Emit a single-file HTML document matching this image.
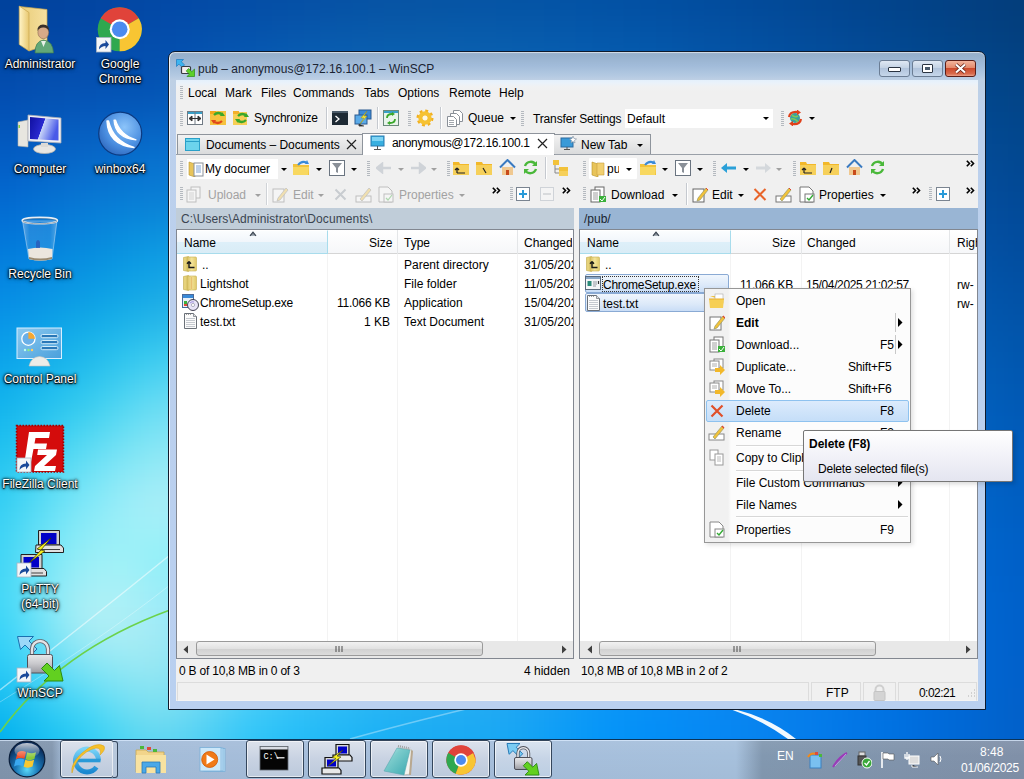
<!DOCTYPE html>
<html><head><meta charset="utf-8">
<style>
*{box-sizing:border-box;margin:0;padding:0}
html,body{width:1024px;height:779px;overflow:hidden}
body{position:relative;font-family:"Liberation Sans",sans-serif;font-size:12px;color:#000;background:#0d56b4}
.a{position:absolute}
.t{position:absolute;white-space:nowrap;line-height:14px}
.dl{position:absolute;color:#fff;font-size:12px;text-align:center;line-height:15px;text-shadow:0 1px 1px #000,0 0 2px #000,0 0 3px #000,0 1px 4px rgba(0,0,0,.7);white-space:nowrap}
#win{position:absolute;left:168px;top:51px;width:818px;height:659px;border:1px solid #0e1a2c;border-radius:7px 7px 0 0;background:linear-gradient(#9fb4cc 0,#96b0cc 3px,#a2bcda 14px,#b4cae2 24px,#bed0e4 28px,#bcd0ec 60px,#b9d0f0 659px);box-shadow:inset 1px 0 0 rgba(255,255,255,.85),inset 0 1px 0 rgba(255,255,255,.5)}
#client{position:absolute;left:176px;top:80px;width:802px;height:621px;background:#f0f0f0}
.grip{position:absolute;width:3px;height:14px;background:repeating-linear-gradient(#b4b9bf 0 1px,transparent 1px 2px)}
.sep{position:absolute;width:1px;height:22px;background:#c5c9cf;box-shadow:1px 0 0 #fff}
.dd{position:absolute;width:0;height:0;border-left:3px solid transparent;border-right:3px solid transparent;border-top:3px solid #000}
.ddg{position:absolute;width:0;height:0;border-left:3px solid transparent;border-right:3px solid transparent;border-top:3px solid #a0a0a0}
.gray{color:#a2a2a2}
#task{position:absolute;left:0;top:739px;width:1024px;height:40px}
</style></head><body>
<svg class="a" style="left:0;top:0" width="1024" height="779"><defs><filter id="bgb" x="-5%" y="-5%" width="110%" height="110%" color-interpolation-filters="sRGB"><feGaussianBlur stdDeviation="9"/></filter></defs><g filter="url(#bgb)"><rect x="-32" y="-32" width="17" height="17" fill="#00409b"/><rect x="-16" y="-32" width="17" height="17" fill="#00409b"/><rect x="0" y="-32" width="17" height="17" fill="#00419c"/><rect x="16" y="-32" width="17" height="17" fill="#00429c"/><rect x="32" y="-32" width="17" height="17" fill="#01429d"/><rect x="48" y="-32" width="17" height="17" fill="#01439e"/><rect x="64" y="-32" width="17" height="17" fill="#02449f"/><rect x="80" y="-32" width="17" height="17" fill="#0244a0"/><rect x="96" y="-32" width="17" height="17" fill="#0245a1"/><rect x="112" y="-32" width="17" height="17" fill="#0346a2"/><rect x="128" y="-32" width="17" height="17" fill="#0347a3"/><rect x="144" y="-32" width="17" height="17" fill="#0348a4"/><rect x="160" y="-32" width="17" height="17" fill="#0348a5"/><rect x="176" y="-32" width="17" height="17" fill="#0349a5"/><rect x="192" y="-32" width="17" height="17" fill="#034aa5"/><rect x="208" y="-32" width="17" height="17" fill="#044ba6"/><rect x="224" y="-32" width="17" height="17" fill="#044ca6"/><rect x="240" y="-32" width="17" height="17" fill="#044da6"/><rect x="256" y="-32" width="17" height="17" fill="#044ea5"/><rect x="272" y="-32" width="17" height="17" fill="#054ea5"/><rect x="288" y="-32" width="17" height="17" fill="#054fa5"/><rect x="304" y="-32" width="17" height="17" fill="#0550a5"/><rect x="320" y="-32" width="17" height="17" fill="#0551a5"/><rect x="336" y="-32" width="17" height="17" fill="#0651a4"/><rect x="352" y="-32" width="17" height="17" fill="#0652a4"/><rect x="368" y="-32" width="17" height="17" fill="#0653a4"/><rect x="384" y="-32" width="17" height="17" fill="#0653a4"/><rect x="400" y="-32" width="17" height="17" fill="#0653a3"/><rect x="416" y="-32" width="17" height="17" fill="#0654a4"/><rect x="432" y="-32" width="17" height="17" fill="#0654a4"/><rect x="448" y="-32" width="17" height="17" fill="#0654a4"/><rect x="464" y="-32" width="17" height="17" fill="#0554a4"/><rect x="480" y="-32" width="17" height="17" fill="#0554a4"/><rect x="496" y="-32" width="17" height="17" fill="#0554a4"/><rect x="512" y="-32" width="17" height="17" fill="#0453a4"/><rect x="528" y="-32" width="17" height="17" fill="#0453a5"/><rect x="544" y="-32" width="17" height="17" fill="#0453a5"/><rect x="560" y="-32" width="17" height="17" fill="#0352a4"/><rect x="576" y="-32" width="17" height="17" fill="#0352a4"/><rect x="592" y="-32" width="17" height="17" fill="#0351a4"/><rect x="608" y="-32" width="17" height="17" fill="#0251a3"/><rect x="624" y="-32" width="17" height="17" fill="#0250a3"/><rect x="640" y="-32" width="17" height="17" fill="#024fa2"/><rect x="656" y="-32" width="17" height="17" fill="#024ea1"/><rect x="672" y="-32" width="17" height="17" fill="#024ea0"/><rect x="688" y="-32" width="17" height="17" fill="#024d9e"/><rect x="704" y="-32" width="17" height="17" fill="#024c9d"/><rect x="720" y="-32" width="17" height="17" fill="#024b9c"/><rect x="736" y="-32" width="17" height="17" fill="#024a9a"/><rect x="752" y="-32" width="17" height="17" fill="#024999"/><rect x="768" y="-32" width="17" height="17" fill="#024997"/><rect x="784" y="-32" width="17" height="17" fill="#024896"/><rect x="800" y="-32" width="17" height="17" fill="#024794"/><rect x="816" y="-32" width="17" height="17" fill="#024692"/><rect x="832" y="-32" width="17" height="17" fill="#024590"/><rect x="848" y="-32" width="17" height="17" fill="#02458e"/><rect x="864" y="-32" width="17" height="17" fill="#02448c"/><rect x="880" y="-32" width="17" height="17" fill="#02438b"/><rect x="896" y="-32" width="17" height="17" fill="#024289"/><rect x="912" y="-32" width="17" height="17" fill="#024287"/><rect x="928" y="-32" width="17" height="17" fill="#024185"/><rect x="944" y="-32" width="17" height="17" fill="#034083"/><rect x="960" y="-32" width="17" height="17" fill="#033f81"/><rect x="976" y="-32" width="17" height="17" fill="#033f7f"/><rect x="992" y="-32" width="17" height="17" fill="#033e7d"/><rect x="1008" y="-32" width="17" height="17" fill="#033d7b"/><rect x="1024" y="-32" width="17" height="17" fill="#043c7a"/><rect x="1040" y="-32" width="17" height="17" fill="#043c7a"/><rect x="1056" y="-32" width="17" height="17" fill="#043c7a"/><rect x="-32" y="-16" width="17" height="17" fill="#00409b"/><rect x="-16" y="-16" width="17" height="17" fill="#00409b"/><rect x="0" y="-16" width="17" height="17" fill="#00419c"/><rect x="16" y="-16" width="17" height="17" fill="#00429c"/><rect x="32" y="-16" width="17" height="17" fill="#01429d"/><rect x="48" y="-16" width="17" height="17" fill="#01439e"/><rect x="64" y="-16" width="17" height="17" fill="#02449f"/><rect x="80" y="-16" width="17" height="17" fill="#0244a0"/><rect x="96" y="-16" width="17" height="17" fill="#0245a1"/><rect x="112" y="-16" width="17" height="17" fill="#0346a2"/><rect x="128" y="-16" width="17" height="17" fill="#0347a3"/><rect x="144" y="-16" width="17" height="17" fill="#0348a4"/><rect x="160" y="-16" width="17" height="17" fill="#0348a5"/><rect x="176" y="-16" width="17" height="17" fill="#0349a5"/><rect x="192" y="-16" width="17" height="17" fill="#034aa5"/><rect x="208" y="-16" width="17" height="17" fill="#044ba6"/><rect x="224" y="-16" width="17" height="17" fill="#044ca6"/><rect x="240" y="-16" width="17" height="17" fill="#044da6"/><rect x="256" y="-16" width="17" height="17" fill="#044ea5"/><rect x="272" y="-16" width="17" height="17" fill="#054ea5"/><rect x="288" y="-16" width="17" height="17" fill="#054fa5"/><rect x="304" y="-16" width="17" height="17" fill="#0550a5"/><rect x="320" y="-16" width="17" height="17" fill="#0551a5"/><rect x="336" y="-16" width="17" height="17" fill="#0651a4"/><rect x="352" y="-16" width="17" height="17" fill="#0652a4"/><rect x="368" y="-16" width="17" height="17" fill="#0653a4"/><rect x="384" y="-16" width="17" height="17" fill="#0653a4"/><rect x="400" y="-16" width="17" height="17" fill="#0653a3"/><rect x="416" y="-16" width="17" height="17" fill="#0654a4"/><rect x="432" y="-16" width="17" height="17" fill="#0654a4"/><rect x="448" y="-16" width="17" height="17" fill="#0654a4"/><rect x="464" y="-16" width="17" height="17" fill="#0554a4"/><rect x="480" y="-16" width="17" height="17" fill="#0554a4"/><rect x="496" y="-16" width="17" height="17" fill="#0554a4"/><rect x="512" y="-16" width="17" height="17" fill="#0453a4"/><rect x="528" y="-16" width="17" height="17" fill="#0453a5"/><rect x="544" y="-16" width="17" height="17" fill="#0453a5"/><rect x="560" y="-16" width="17" height="17" fill="#0352a4"/><rect x="576" y="-16" width="17" height="17" fill="#0352a4"/><rect x="592" y="-16" width="17" height="17" fill="#0351a4"/><rect x="608" y="-16" width="17" height="17" fill="#0251a3"/><rect x="624" y="-16" width="17" height="17" fill="#0250a3"/><rect x="640" y="-16" width="17" height="17" fill="#024fa2"/><rect x="656" y="-16" width="17" height="17" fill="#024ea1"/><rect x="672" y="-16" width="17" height="17" fill="#024ea0"/><rect x="688" y="-16" width="17" height="17" fill="#024d9e"/><rect x="704" y="-16" width="17" height="17" fill="#024c9d"/><rect x="720" y="-16" width="17" height="17" fill="#024b9c"/><rect x="736" y="-16" width="17" height="17" fill="#024a9a"/><rect x="752" y="-16" width="17" height="17" fill="#024999"/><rect x="768" y="-16" width="17" height="17" fill="#024997"/><rect x="784" y="-16" width="17" height="17" fill="#024896"/><rect x="800" y="-16" width="17" height="17" fill="#024794"/><rect x="816" y="-16" width="17" height="17" fill="#024692"/><rect x="832" y="-16" width="17" height="17" fill="#024590"/><rect x="848" y="-16" width="17" height="17" fill="#02458e"/><rect x="864" y="-16" width="17" height="17" fill="#02448c"/><rect x="880" y="-16" width="17" height="17" fill="#02438b"/><rect x="896" y="-16" width="17" height="17" fill="#024289"/><rect x="912" y="-16" width="17" height="17" fill="#024287"/><rect x="928" y="-16" width="17" height="17" fill="#024185"/><rect x="944" y="-16" width="17" height="17" fill="#034083"/><rect x="960" y="-16" width="17" height="17" fill="#033f81"/><rect x="976" y="-16" width="17" height="17" fill="#033f7f"/><rect x="992" y="-16" width="17" height="17" fill="#033e7d"/><rect x="1008" y="-16" width="17" height="17" fill="#033d7b"/><rect x="1024" y="-16" width="17" height="17" fill="#043c7a"/><rect x="1040" y="-16" width="17" height="17" fill="#043c7a"/><rect x="1056" y="-16" width="17" height="17" fill="#043c7a"/><rect x="-32" y="0" width="17" height="17" fill="#00419d"/><rect x="-16" y="0" width="17" height="17" fill="#00419d"/><rect x="0" y="0" width="17" height="17" fill="#00429d"/><rect x="16" y="0" width="17" height="17" fill="#00439e"/><rect x="32" y="0" width="17" height="17" fill="#01439f"/><rect x="48" y="0" width="17" height="17" fill="#0244a0"/><rect x="64" y="0" width="17" height="17" fill="#0245a1"/><rect x="80" y="0" width="17" height="17" fill="#0245a2"/><rect x="96" y="0" width="17" height="17" fill="#0346a3"/><rect x="112" y="0" width="17" height="17" fill="#0347a4"/><rect x="128" y="0" width="17" height="17" fill="#0348a5"/><rect x="144" y="0" width="17" height="17" fill="#0349a6"/><rect x="160" y="0" width="17" height="17" fill="#034aa7"/><rect x="176" y="0" width="17" height="17" fill="#034aa7"/><rect x="192" y="0" width="17" height="17" fill="#044ba7"/><rect x="208" y="0" width="17" height="17" fill="#044ca7"/><rect x="224" y="0" width="17" height="17" fill="#044da7"/><rect x="240" y="0" width="17" height="17" fill="#044ea7"/><rect x="256" y="0" width="17" height="17" fill="#054fa7"/><rect x="272" y="0" width="17" height="17" fill="#0550a7"/><rect x="288" y="0" width="17" height="17" fill="#0551a7"/><rect x="304" y="0" width="17" height="17" fill="#0652a7"/><rect x="320" y="0" width="17" height="17" fill="#0652a6"/><rect x="336" y="0" width="17" height="17" fill="#0653a6"/><rect x="352" y="0" width="17" height="17" fill="#0654a6"/><rect x="368" y="0" width="17" height="17" fill="#0754a5"/><rect x="384" y="0" width="17" height="17" fill="#0755a5"/><rect x="400" y="0" width="17" height="17" fill="#0755a5"/><rect x="416" y="0" width="17" height="17" fill="#0755a5"/><rect x="432" y="0" width="17" height="17" fill="#0655a5"/><rect x="448" y="0" width="17" height="17" fill="#0655a5"/><rect x="464" y="0" width="17" height="17" fill="#0655a6"/><rect x="480" y="0" width="17" height="17" fill="#0655a6"/><rect x="496" y="0" width="17" height="17" fill="#0555a6"/><rect x="512" y="0" width="17" height="17" fill="#0555a6"/><rect x="528" y="0" width="17" height="17" fill="#0555a6"/><rect x="544" y="0" width="17" height="17" fill="#0454a6"/><rect x="560" y="0" width="17" height="17" fill="#0454a6"/><rect x="576" y="0" width="17" height="17" fill="#0353a6"/><rect x="592" y="0" width="17" height="17" fill="#0353a5"/><rect x="608" y="0" width="17" height="17" fill="#0352a5"/><rect x="624" y="0" width="17" height="17" fill="#0351a4"/><rect x="640" y="0" width="17" height="17" fill="#0250a3"/><rect x="656" y="0" width="17" height="17" fill="#0250a2"/><rect x="672" y="0" width="17" height="17" fill="#024fa1"/><rect x="688" y="0" width="17" height="17" fill="#024ea0"/><rect x="704" y="0" width="17" height="17" fill="#024d9f"/><rect x="720" y="0" width="17" height="17" fill="#024c9d"/><rect x="736" y="0" width="17" height="17" fill="#024b9c"/><rect x="752" y="0" width="17" height="17" fill="#024a9a"/><rect x="768" y="0" width="17" height="17" fill="#024a99"/><rect x="784" y="0" width="17" height="17" fill="#024997"/><rect x="800" y="0" width="17" height="17" fill="#024895"/><rect x="816" y="0" width="17" height="17" fill="#024793"/><rect x="832" y="0" width="17" height="17" fill="#024692"/><rect x="848" y="0" width="17" height="17" fill="#024590"/><rect x="864" y="0" width="17" height="17" fill="#02458e"/><rect x="880" y="0" width="17" height="17" fill="#02448c"/><rect x="896" y="0" width="17" height="17" fill="#02438a"/><rect x="912" y="0" width="17" height="17" fill="#024288"/><rect x="928" y="0" width="17" height="17" fill="#024286"/><rect x="944" y="0" width="17" height="17" fill="#034184"/><rect x="960" y="0" width="17" height="17" fill="#034082"/><rect x="976" y="0" width="17" height="17" fill="#033f80"/><rect x="992" y="0" width="17" height="17" fill="#033e7e"/><rect x="1008" y="0" width="17" height="17" fill="#033e7c"/><rect x="1024" y="0" width="17" height="17" fill="#043d7b"/><rect x="1040" y="0" width="17" height="17" fill="#043d7b"/><rect x="1056" y="0" width="17" height="17" fill="#043d7b"/><rect x="-32" y="16" width="17" height="17" fill="#0044a0"/><rect x="-16" y="16" width="17" height="17" fill="#0044a0"/><rect x="0" y="16" width="17" height="17" fill="#0044a0"/><rect x="16" y="16" width="17" height="17" fill="#0145a1"/><rect x="32" y="16" width="17" height="17" fill="#0246a2"/><rect x="48" y="16" width="17" height="17" fill="#0246a3"/><rect x="64" y="16" width="17" height="17" fill="#0347a4"/><rect x="80" y="16" width="17" height="17" fill="#0347a5"/><rect x="96" y="16" width="17" height="17" fill="#0348a6"/><rect x="112" y="16" width="17" height="17" fill="#0349a7"/><rect x="128" y="16" width="17" height="17" fill="#034aa8"/><rect x="144" y="16" width="17" height="17" fill="#034ba9"/><rect x="160" y="16" width="17" height="17" fill="#044caa"/><rect x="176" y="16" width="17" height="17" fill="#044daa"/><rect x="192" y="16" width="17" height="17" fill="#044eaa"/><rect x="208" y="16" width="17" height="17" fill="#044faa"/><rect x="224" y="16" width="17" height="17" fill="#0450aa"/><rect x="240" y="16" width="17" height="17" fill="#0551ab"/><rect x="256" y="16" width="17" height="17" fill="#0552aa"/><rect x="272" y="16" width="17" height="17" fill="#0653aa"/><rect x="288" y="16" width="17" height="17" fill="#0654aa"/><rect x="304" y="16" width="17" height="17" fill="#0655aa"/><rect x="320" y="16" width="17" height="17" fill="#0756aa"/><rect x="336" y="16" width="17" height="17" fill="#0757a9"/><rect x="352" y="16" width="17" height="17" fill="#0757a9"/><rect x="368" y="16" width="17" height="17" fill="#0858a9"/><rect x="384" y="16" width="17" height="17" fill="#0858a8"/><rect x="400" y="16" width="17" height="17" fill="#0858a8"/><rect x="416" y="16" width="17" height="17" fill="#0859a8"/><rect x="432" y="16" width="17" height="17" fill="#0859a8"/><rect x="448" y="16" width="17" height="17" fill="#0759a9"/><rect x="464" y="16" width="17" height="17" fill="#0759a9"/><rect x="480" y="16" width="17" height="17" fill="#0759a9"/><rect x="496" y="16" width="17" height="17" fill="#0658a9"/><rect x="512" y="16" width="17" height="17" fill="#0658a9"/><rect x="528" y="16" width="17" height="17" fill="#0658a9"/><rect x="544" y="16" width="17" height="17" fill="#0557a9"/><rect x="560" y="16" width="17" height="17" fill="#0557a9"/><rect x="576" y="16" width="17" height="17" fill="#0456a9"/><rect x="592" y="16" width="17" height="17" fill="#0455a8"/><rect x="608" y="16" width="17" height="17" fill="#0455a8"/><rect x="624" y="16" width="17" height="17" fill="#0354a7"/><rect x="640" y="16" width="17" height="17" fill="#0353a6"/><rect x="656" y="16" width="17" height="17" fill="#0352a5"/><rect x="672" y="16" width="17" height="17" fill="#0351a4"/><rect x="688" y="16" width="17" height="17" fill="#0350a3"/><rect x="704" y="16" width="17" height="17" fill="#0350a1"/><rect x="720" y="16" width="17" height="17" fill="#034fa0"/><rect x="736" y="16" width="17" height="17" fill="#034e9e"/><rect x="752" y="16" width="17" height="17" fill="#034d9d"/><rect x="768" y="16" width="17" height="17" fill="#034c9b"/><rect x="784" y="16" width="17" height="17" fill="#034b9a"/><rect x="800" y="16" width="17" height="17" fill="#034a98"/><rect x="816" y="16" width="17" height="17" fill="#034996"/><rect x="832" y="16" width="17" height="17" fill="#024894"/><rect x="848" y="16" width="17" height="17" fill="#024792"/><rect x="864" y="16" width="17" height="17" fill="#024690"/><rect x="880" y="16" width="17" height="17" fill="#02468e"/><rect x="896" y="16" width="17" height="17" fill="#02458c"/><rect x="912" y="16" width="17" height="17" fill="#02448a"/><rect x="928" y="16" width="17" height="17" fill="#024388"/><rect x="944" y="16" width="17" height="17" fill="#034286"/><rect x="960" y="16" width="17" height="17" fill="#034284"/><rect x="976" y="16" width="17" height="17" fill="#034182"/><rect x="992" y="16" width="17" height="17" fill="#034080"/><rect x="1008" y="16" width="17" height="17" fill="#033f7e"/><rect x="1024" y="16" width="17" height="17" fill="#033f7d"/><rect x="1040" y="16" width="17" height="17" fill="#033f7d"/><rect x="1056" y="16" width="17" height="17" fill="#033f7d"/><rect x="-32" y="32" width="17" height="17" fill="#0046a3"/><rect x="-16" y="32" width="17" height="17" fill="#0046a3"/><rect x="0" y="32" width="17" height="17" fill="#0146a4"/><rect x="16" y="32" width="17" height="17" fill="#0247a4"/><rect x="32" y="32" width="17" height="17" fill="#0248a5"/><rect x="48" y="32" width="17" height="17" fill="#0348a6"/><rect x="64" y="32" width="17" height="17" fill="#0349a7"/><rect x="80" y="32" width="17" height="17" fill="#034aa8"/><rect x="96" y="32" width="17" height="17" fill="#034aa9"/><rect x="112" y="32" width="17" height="17" fill="#034baa"/><rect x="128" y="32" width="17" height="17" fill="#044cab"/><rect x="144" y="32" width="17" height="17" fill="#044dac"/><rect x="160" y="32" width="17" height="17" fill="#044eac"/><rect x="176" y="32" width="17" height="17" fill="#044fad"/><rect x="192" y="32" width="17" height="17" fill="#0450ad"/><rect x="208" y="32" width="17" height="17" fill="#0552ad"/><rect x="224" y="32" width="17" height="17" fill="#0553ae"/><rect x="240" y="32" width="17" height="17" fill="#0554ae"/><rect x="256" y="32" width="17" height="17" fill="#0655ae"/><rect x="272" y="32" width="17" height="17" fill="#0657ae"/><rect x="288" y="32" width="17" height="17" fill="#0758ae"/><rect x="304" y="32" width="17" height="17" fill="#0759ae"/><rect x="320" y="32" width="17" height="17" fill="#085aad"/><rect x="336" y="32" width="17" height="17" fill="#085aad"/><rect x="352" y="32" width="17" height="17" fill="#095bad"/><rect x="368" y="32" width="17" height="17" fill="#095bac"/><rect x="384" y="32" width="17" height="17" fill="#095cac"/><rect x="400" y="32" width="17" height="17" fill="#095cac"/><rect x="416" y="32" width="17" height="17" fill="#095cac"/><rect x="432" y="32" width="17" height="17" fill="#095cac"/><rect x="448" y="32" width="17" height="17" fill="#095cac"/><rect x="464" y="32" width="17" height="17" fill="#085cac"/><rect x="480" y="32" width="17" height="17" fill="#085cac"/><rect x="496" y="32" width="17" height="17" fill="#085cac"/><rect x="512" y="32" width="17" height="17" fill="#075bac"/><rect x="528" y="32" width="17" height="17" fill="#075bac"/><rect x="544" y="32" width="17" height="17" fill="#065aac"/><rect x="560" y="32" width="17" height="17" fill="#065aac"/><rect x="576" y="32" width="17" height="17" fill="#0559ac"/><rect x="592" y="32" width="17" height="17" fill="#0558ab"/><rect x="608" y="32" width="17" height="17" fill="#0558ab"/><rect x="624" y="32" width="17" height="17" fill="#0457aa"/><rect x="640" y="32" width="17" height="17" fill="#0456a9"/><rect x="656" y="32" width="17" height="17" fill="#0455a8"/><rect x="672" y="32" width="17" height="17" fill="#0454a7"/><rect x="688" y="32" width="17" height="17" fill="#0453a5"/><rect x="704" y="32" width="17" height="17" fill="#0452a4"/><rect x="720" y="32" width="17" height="17" fill="#0351a3"/><rect x="736" y="32" width="17" height="17" fill="#0350a1"/><rect x="752" y="32" width="17" height="17" fill="#034fa0"/><rect x="768" y="32" width="17" height="17" fill="#034e9e"/><rect x="784" y="32" width="17" height="17" fill="#034d9c"/><rect x="800" y="32" width="17" height="17" fill="#034c9a"/><rect x="816" y="32" width="17" height="17" fill="#034b99"/><rect x="832" y="32" width="17" height="17" fill="#034a97"/><rect x="848" y="32" width="17" height="17" fill="#034995"/><rect x="864" y="32" width="17" height="17" fill="#034893"/><rect x="880" y="32" width="17" height="17" fill="#024791"/><rect x="896" y="32" width="17" height="17" fill="#02478f"/><rect x="912" y="32" width="17" height="17" fill="#02468d"/><rect x="928" y="32" width="17" height="17" fill="#02458a"/><rect x="944" y="32" width="17" height="17" fill="#024488"/><rect x="960" y="32" width="17" height="17" fill="#034386"/><rect x="976" y="32" width="17" height="17" fill="#034284"/><rect x="992" y="32" width="17" height="17" fill="#034182"/><rect x="1008" y="32" width="17" height="17" fill="#034080"/><rect x="1024" y="32" width="17" height="17" fill="#034080"/><rect x="1040" y="32" width="17" height="17" fill="#034080"/><rect x="1056" y="32" width="17" height="17" fill="#034080"/><rect x="-32" y="48" width="17" height="17" fill="#0148a7"/><rect x="-16" y="48" width="17" height="17" fill="#0148a7"/><rect x="0" y="48" width="17" height="17" fill="#0148a7"/><rect x="16" y="48" width="17" height="17" fill="#0249a8"/><rect x="32" y="48" width="17" height="17" fill="#034aa9"/><rect x="48" y="48" width="17" height="17" fill="#034baa"/><rect x="64" y="48" width="17" height="17" fill="#044bab"/><rect x="80" y="48" width="17" height="17" fill="#044cab"/><rect x="96" y="48" width="17" height="17" fill="#044dac"/><rect x="112" y="48" width="17" height="17" fill="#044dad"/><rect x="128" y="48" width="17" height="17" fill="#044eae"/><rect x="144" y="48" width="17" height="17" fill="#044fae"/><rect x="160" y="48" width="17" height="17" fill="#0450af"/><rect x="176" y="48" width="17" height="17" fill="#0451b0"/><rect x="192" y="48" width="17" height="17" fill="#0553b0"/><rect x="208" y="48" width="17" height="17" fill="#0555b1"/><rect x="224" y="48" width="17" height="17" fill="#0656b1"/><rect x="240" y="48" width="17" height="17" fill="#0658b1"/><rect x="256" y="48" width="17" height="17" fill="#0759b2"/><rect x="272" y="48" width="17" height="17" fill="#075ab1"/><rect x="288" y="48" width="17" height="17" fill="#085cb1"/><rect x="304" y="48" width="17" height="17" fill="#085db1"/><rect x="320" y="48" width="17" height="17" fill="#095db1"/><rect x="336" y="48" width="17" height="17" fill="#095eb1"/><rect x="352" y="48" width="17" height="17" fill="#0a5fb0"/><rect x="368" y="48" width="17" height="17" fill="#0a5fb0"/><rect x="384" y="48" width="17" height="17" fill="#0a60b0"/><rect x="400" y="48" width="17" height="17" fill="#0a60af"/><rect x="416" y="48" width="17" height="17" fill="#0a60af"/><rect x="432" y="48" width="17" height="17" fill="#0a60af"/><rect x="448" y="48" width="17" height="17" fill="#0a60af"/><rect x="464" y="48" width="17" height="17" fill="#0a60af"/><rect x="480" y="48" width="17" height="17" fill="#0a5faf"/><rect x="496" y="48" width="17" height="17" fill="#095faf"/><rect x="512" y="48" width="17" height="17" fill="#095faf"/><rect x="528" y="48" width="17" height="17" fill="#085eaf"/><rect x="544" y="48" width="17" height="17" fill="#085eaf"/><rect x="560" y="48" width="17" height="17" fill="#075daf"/><rect x="576" y="48" width="17" height="17" fill="#075caf"/><rect x="592" y="48" width="17" height="17" fill="#065bae"/><rect x="608" y="48" width="17" height="17" fill="#065aad"/><rect x="624" y="48" width="17" height="17" fill="#055aad"/><rect x="640" y="48" width="17" height="17" fill="#0559ac"/><rect x="656" y="48" width="17" height="17" fill="#0558ab"/><rect x="672" y="48" width="17" height="17" fill="#0557a9"/><rect x="688" y="48" width="17" height="17" fill="#0455a8"/><rect x="704" y="48" width="17" height="17" fill="#0454a7"/><rect x="720" y="48" width="17" height="17" fill="#0453a5"/><rect x="736" y="48" width="17" height="17" fill="#0452a4"/><rect x="752" y="48" width="17" height="17" fill="#0451a2"/><rect x="768" y="48" width="17" height="17" fill="#0450a1"/><rect x="784" y="48" width="17" height="17" fill="#034f9f"/><rect x="800" y="48" width="17" height="17" fill="#034e9d"/><rect x="816" y="48" width="17" height="17" fill="#034d9b"/><rect x="832" y="48" width="17" height="17" fill="#034c99"/><rect x="848" y="48" width="17" height="17" fill="#034b97"/><rect x="864" y="48" width="17" height="17" fill="#034a95"/><rect x="880" y="48" width="17" height="17" fill="#034993"/><rect x="896" y="48" width="17" height="17" fill="#034891"/><rect x="912" y="48" width="17" height="17" fill="#02478f"/><rect x="928" y="48" width="17" height="17" fill="#02468d"/><rect x="944" y="48" width="17" height="17" fill="#02468b"/><rect x="960" y="48" width="17" height="17" fill="#024589"/><rect x="976" y="48" width="17" height="17" fill="#034487"/><rect x="992" y="48" width="17" height="17" fill="#034385"/><rect x="1008" y="48" width="17" height="17" fill="#034283"/><rect x="1024" y="48" width="17" height="17" fill="#034182"/><rect x="1040" y="48" width="17" height="17" fill="#034182"/><rect x="1056" y="48" width="17" height="17" fill="#034182"/><rect x="-32" y="64" width="17" height="17" fill="#014aab"/><rect x="-16" y="64" width="17" height="17" fill="#014aab"/><rect x="0" y="64" width="17" height="17" fill="#024bab"/><rect x="16" y="64" width="17" height="17" fill="#034cac"/><rect x="32" y="64" width="17" height="17" fill="#044dad"/><rect x="48" y="64" width="17" height="17" fill="#044dad"/><rect x="64" y="64" width="17" height="17" fill="#044eae"/><rect x="80" y="64" width="17" height="17" fill="#044faf"/><rect x="96" y="64" width="17" height="17" fill="#044fb0"/><rect x="112" y="64" width="17" height="17" fill="#0450b0"/><rect x="128" y="64" width="17" height="17" fill="#0450b1"/><rect x="144" y="64" width="17" height="17" fill="#0451b1"/><rect x="160" y="64" width="17" height="17" fill="#0453b2"/><rect x="176" y="64" width="17" height="17" fill="#0454b3"/><rect x="192" y="64" width="17" height="17" fill="#0556b4"/><rect x="208" y="64" width="17" height="17" fill="#0658b4"/><rect x="224" y="64" width="17" height="17" fill="#065ab5"/><rect x="240" y="64" width="17" height="17" fill="#075cb5"/><rect x="256" y="64" width="17" height="17" fill="#085db5"/><rect x="272" y="64" width="17" height="17" fill="#085eb5"/><rect x="288" y="64" width="17" height="17" fill="#0960b5"/><rect x="304" y="64" width="17" height="17" fill="#0a61b5"/><rect x="320" y="64" width="17" height="17" fill="#0a62b5"/><rect x="336" y="64" width="17" height="17" fill="#0b62b4"/><rect x="352" y="64" width="17" height="17" fill="#0b63b4"/><rect x="368" y="64" width="17" height="17" fill="#0c63b4"/><rect x="384" y="64" width="17" height="17" fill="#0c64b3"/><rect x="400" y="64" width="17" height="17" fill="#0c64b3"/><rect x="416" y="64" width="17" height="17" fill="#0c64b3"/><rect x="432" y="64" width="17" height="17" fill="#0c64b3"/><rect x="448" y="64" width="17" height="17" fill="#0c64b3"/><rect x="464" y="64" width="17" height="17" fill="#0c63b3"/><rect x="480" y="64" width="17" height="17" fill="#0b63b3"/><rect x="496" y="64" width="17" height="17" fill="#0b63b3"/><rect x="512" y="64" width="17" height="17" fill="#0a62b3"/><rect x="528" y="64" width="17" height="17" fill="#0a61b2"/><rect x="544" y="64" width="17" height="17" fill="#0961b2"/><rect x="560" y="64" width="17" height="17" fill="#0960b2"/><rect x="576" y="64" width="17" height="17" fill="#085fb1"/><rect x="592" y="64" width="17" height="17" fill="#085eb1"/><rect x="608" y="64" width="17" height="17" fill="#075db0"/><rect x="624" y="64" width="17" height="17" fill="#075caf"/><rect x="640" y="64" width="17" height="17" fill="#065bae"/><rect x="656" y="64" width="17" height="17" fill="#065aad"/><rect x="672" y="64" width="17" height="17" fill="#0659ac"/><rect x="688" y="64" width="17" height="17" fill="#0558ab"/><rect x="704" y="64" width="17" height="17" fill="#0557a9"/><rect x="720" y="64" width="17" height="17" fill="#0556a8"/><rect x="736" y="64" width="17" height="17" fill="#0554a6"/><rect x="752" y="64" width="17" height="17" fill="#0453a5"/><rect x="768" y="64" width="17" height="17" fill="#0452a3"/><rect x="784" y="64" width="17" height="17" fill="#0451a1"/><rect x="800" y="64" width="17" height="17" fill="#0450a0"/><rect x="816" y="64" width="17" height="17" fill="#044f9e"/><rect x="832" y="64" width="17" height="17" fill="#034e9c"/><rect x="848" y="64" width="17" height="17" fill="#034d9a"/><rect x="864" y="64" width="17" height="17" fill="#034c98"/><rect x="880" y="64" width="17" height="17" fill="#034b96"/><rect x="896" y="64" width="17" height="17" fill="#034a93"/><rect x="912" y="64" width="17" height="17" fill="#034991"/><rect x="928" y="64" width="17" height="17" fill="#03488f"/><rect x="944" y="64" width="17" height="17" fill="#02478d"/><rect x="960" y="64" width="17" height="17" fill="#02468b"/><rect x="976" y="64" width="17" height="17" fill="#024589"/><rect x="992" y="64" width="17" height="17" fill="#034487"/><rect x="1008" y="64" width="17" height="17" fill="#034385"/><rect x="1024" y="64" width="17" height="17" fill="#034384"/><rect x="1040" y="64" width="17" height="17" fill="#034384"/><rect x="1056" y="64" width="17" height="17" fill="#034384"/><rect x="-32" y="80" width="17" height="17" fill="#024daf"/><rect x="-16" y="80" width="17" height="17" fill="#024daf"/><rect x="0" y="80" width="17" height="17" fill="#034daf"/><rect x="16" y="80" width="17" height="17" fill="#044eb0"/><rect x="32" y="80" width="17" height="17" fill="#0450b1"/><rect x="48" y="80" width="17" height="17" fill="#0551b2"/><rect x="64" y="80" width="17" height="17" fill="#0552b3"/><rect x="80" y="80" width="17" height="17" fill="#0552b3"/><rect x="96" y="80" width="17" height="17" fill="#0553b4"/><rect x="112" y="80" width="17" height="17" fill="#0453b4"/><rect x="128" y="80" width="17" height="17" fill="#0454b4"/><rect x="144" y="80" width="17" height="17" fill="#0454b5"/><rect x="160" y="80" width="17" height="17" fill="#0456b5"/><rect x="176" y="80" width="17" height="17" fill="#0558b6"/><rect x="960" y="80" width="17" height="17" fill="#02478d"/><rect x="976" y="80" width="17" height="17" fill="#02468b"/><rect x="992" y="80" width="17" height="17" fill="#024589"/><rect x="1008" y="80" width="17" height="17" fill="#034487"/><rect x="1024" y="80" width="17" height="17" fill="#034486"/><rect x="1040" y="80" width="17" height="17" fill="#034486"/><rect x="1056" y="80" width="17" height="17" fill="#034486"/><rect x="-32" y="96" width="17" height="17" fill="#0250b3"/><rect x="-16" y="96" width="17" height="17" fill="#0250b3"/><rect x="0" y="96" width="17" height="17" fill="#0350b4"/><rect x="16" y="96" width="17" height="17" fill="#0452b4"/><rect x="32" y="96" width="17" height="17" fill="#0553b5"/><rect x="48" y="96" width="17" height="17" fill="#0554b6"/><rect x="64" y="96" width="17" height="17" fill="#0555b7"/><rect x="80" y="96" width="17" height="17" fill="#0556b8"/><rect x="96" y="96" width="17" height="17" fill="#0557b9"/><rect x="112" y="96" width="17" height="17" fill="#0558b9"/><rect x="128" y="96" width="17" height="17" fill="#0558b9"/><rect x="144" y="96" width="17" height="17" fill="#0559b9"/><rect x="160" y="96" width="17" height="17" fill="#055bba"/><rect x="176" y="96" width="17" height="17" fill="#065dbb"/><rect x="960" y="96" width="17" height="17" fill="#024890"/><rect x="976" y="96" width="17" height="17" fill="#02478d"/><rect x="992" y="96" width="17" height="17" fill="#02468b"/><rect x="1008" y="96" width="17" height="17" fill="#034589"/><rect x="1024" y="96" width="17" height="17" fill="#034588"/><rect x="1040" y="96" width="17" height="17" fill="#034588"/><rect x="1056" y="96" width="17" height="17" fill="#034588"/><rect x="-32" y="112" width="17" height="17" fill="#0253b8"/><rect x="-16" y="112" width="17" height="17" fill="#0253b8"/><rect x="0" y="112" width="17" height="17" fill="#0354b8"/><rect x="16" y="112" width="17" height="17" fill="#0455b9"/><rect x="32" y="112" width="17" height="17" fill="#0557ba"/><rect x="48" y="112" width="17" height="17" fill="#0558bb"/><rect x="64" y="112" width="17" height="17" fill="#065abc"/><rect x="80" y="112" width="17" height="17" fill="#065bbd"/><rect x="96" y="112" width="17" height="17" fill="#065cbe"/><rect x="112" y="112" width="17" height="17" fill="#065dbe"/><rect x="128" y="112" width="17" height="17" fill="#055ebf"/><rect x="144" y="112" width="17" height="17" fill="#0660c0"/><rect x="160" y="112" width="17" height="17" fill="#0661c0"/><rect x="176" y="112" width="17" height="17" fill="#0663c1"/><rect x="960" y="112" width="17" height="17" fill="#034a92"/><rect x="976" y="112" width="17" height="17" fill="#024890"/><rect x="992" y="112" width="17" height="17" fill="#02478e"/><rect x="1008" y="112" width="17" height="17" fill="#02468c"/><rect x="1024" y="112" width="17" height="17" fill="#03468b"/><rect x="1040" y="112" width="17" height="17" fill="#03468b"/><rect x="1056" y="112" width="17" height="17" fill="#03468b"/><rect x="-32" y="128" width="17" height="17" fill="#0257bd"/><rect x="-16" y="128" width="17" height="17" fill="#0257bd"/><rect x="0" y="128" width="17" height="17" fill="#0358bd"/><rect x="16" y="128" width="17" height="17" fill="#0459be"/><rect x="32" y="128" width="17" height="17" fill="#055bbf"/><rect x="48" y="128" width="17" height="17" fill="#065dc0"/><rect x="64" y="128" width="17" height="17" fill="#065fc1"/><rect x="80" y="128" width="17" height="17" fill="#0660c2"/><rect x="96" y="128" width="17" height="17" fill="#0662c3"/><rect x="112" y="128" width="17" height="17" fill="#0663c4"/><rect x="128" y="128" width="17" height="17" fill="#0665c5"/><rect x="144" y="128" width="17" height="17" fill="#0767c6"/><rect x="160" y="128" width="17" height="17" fill="#0768c7"/><rect x="176" y="128" width="17" height="17" fill="#086ac6"/><rect x="960" y="128" width="17" height="17" fill="#034b94"/><rect x="976" y="128" width="17" height="17" fill="#034992"/><rect x="992" y="128" width="17" height="17" fill="#024890"/><rect x="1008" y="128" width="17" height="17" fill="#02478e"/><rect x="1024" y="128" width="17" height="17" fill="#02468d"/><rect x="1040" y="128" width="17" height="17" fill="#02468d"/><rect x="1056" y="128" width="17" height="17" fill="#02468d"/><rect x="-32" y="144" width="17" height="17" fill="#025bc2"/><rect x="-16" y="144" width="17" height="17" fill="#025bc2"/><rect x="0" y="144" width="17" height="17" fill="#035cc2"/><rect x="16" y="144" width="17" height="17" fill="#045ec3"/><rect x="32" y="144" width="17" height="17" fill="#0560c4"/><rect x="48" y="144" width="17" height="17" fill="#0662c5"/><rect x="64" y="144" width="17" height="17" fill="#0664c6"/><rect x="80" y="144" width="17" height="17" fill="#0766c7"/><rect x="96" y="144" width="17" height="17" fill="#0768c8"/><rect x="112" y="144" width="17" height="17" fill="#076ac9"/><rect x="128" y="144" width="17" height="17" fill="#076ccb"/><rect x="144" y="144" width="17" height="17" fill="#076ecc"/><rect x="160" y="144" width="17" height="17" fill="#086fcc"/><rect x="176" y="144" width="17" height="17" fill="#0970cc"/><rect x="960" y="144" width="17" height="17" fill="#034b97"/><rect x="976" y="144" width="17" height="17" fill="#034a95"/><rect x="992" y="144" width="17" height="17" fill="#034993"/><rect x="1008" y="144" width="17" height="17" fill="#024890"/><rect x="1024" y="144" width="17" height="17" fill="#024790"/><rect x="1040" y="144" width="17" height="17" fill="#024790"/><rect x="1056" y="144" width="17" height="17" fill="#024790"/><rect x="-32" y="160" width="17" height="17" fill="#025fc7"/><rect x="-16" y="160" width="17" height="17" fill="#025fc7"/><rect x="0" y="160" width="17" height="17" fill="#0360c7"/><rect x="16" y="160" width="17" height="17" fill="#0463c8"/><rect x="32" y="160" width="17" height="17" fill="#0565c9"/><rect x="48" y="160" width="17" height="17" fill="#0667ca"/><rect x="64" y="160" width="17" height="17" fill="#076aca"/><rect x="80" y="160" width="17" height="17" fill="#076ccb"/><rect x="96" y="160" width="17" height="17" fill="#076ecc"/><rect x="112" y="160" width="17" height="17" fill="#0770ce"/><rect x="128" y="160" width="17" height="17" fill="#0872cf"/><rect x="144" y="160" width="17" height="17" fill="#0874d0"/><rect x="160" y="160" width="17" height="17" fill="#0975d0"/><rect x="176" y="160" width="17" height="17" fill="#0a77d0"/><rect x="960" y="160" width="17" height="17" fill="#034c99"/><rect x="976" y="160" width="17" height="17" fill="#034b97"/><rect x="992" y="160" width="17" height="17" fill="#034a95"/><rect x="1008" y="160" width="17" height="17" fill="#024893"/><rect x="1024" y="160" width="17" height="17" fill="#024892"/><rect x="1040" y="160" width="17" height="17" fill="#024892"/><rect x="1056" y="160" width="17" height="17" fill="#024892"/><rect x="-32" y="176" width="17" height="17" fill="#0264cb"/><rect x="-16" y="176" width="17" height="17" fill="#0264cb"/><rect x="0" y="176" width="17" height="17" fill="#0365cc"/><rect x="16" y="176" width="17" height="17" fill="#0468cd"/><rect x="32" y="176" width="17" height="17" fill="#056acd"/><rect x="48" y="176" width="17" height="17" fill="#066dce"/><rect x="64" y="176" width="17" height="17" fill="#076fcf"/><rect x="80" y="176" width="17" height="17" fill="#0772d0"/><rect x="96" y="176" width="17" height="17" fill="#0874d1"/><rect x="112" y="176" width="17" height="17" fill="#0876d1"/><rect x="128" y="176" width="17" height="17" fill="#0878d2"/><rect x="144" y="176" width="17" height="17" fill="#0979d3"/><rect x="160" y="176" width="17" height="17" fill="#0a7bd3"/><rect x="176" y="176" width="17" height="17" fill="#0b7dd3"/><rect x="960" y="176" width="17" height="17" fill="#034d9c"/><rect x="976" y="176" width="17" height="17" fill="#034c9a"/><rect x="992" y="176" width="17" height="17" fill="#034a97"/><rect x="1008" y="176" width="17" height="17" fill="#024995"/><rect x="1024" y="176" width="17" height="17" fill="#024894"/><rect x="1040" y="176" width="17" height="17" fill="#024894"/><rect x="1056" y="176" width="17" height="17" fill="#024894"/><rect x="-32" y="192" width="17" height="17" fill="#0269d0"/><rect x="-16" y="192" width="17" height="17" fill="#0269d0"/><rect x="0" y="192" width="17" height="17" fill="#036ad0"/><rect x="16" y="192" width="17" height="17" fill="#046dd1"/><rect x="32" y="192" width="17" height="17" fill="#0570d2"/><rect x="48" y="192" width="17" height="17" fill="#0672d2"/><rect x="64" y="192" width="17" height="17" fill="#0775d3"/><rect x="80" y="192" width="17" height="17" fill="#0878d4"/><rect x="96" y="192" width="17" height="17" fill="#087ad4"/><rect x="112" y="192" width="17" height="17" fill="#087cd5"/><rect x="128" y="192" width="17" height="17" fill="#097ed6"/><rect x="144" y="192" width="17" height="17" fill="#0a80d6"/><rect x="160" y="192" width="17" height="17" fill="#0b81d6"/><rect x="176" y="192" width="17" height="17" fill="#0c83d7"/><rect x="960" y="192" width="17" height="17" fill="#034e9e"/><rect x="976" y="192" width="17" height="17" fill="#034d9c"/><rect x="992" y="192" width="17" height="17" fill="#034b9a"/><rect x="1008" y="192" width="17" height="17" fill="#024a98"/><rect x="1024" y="192" width="17" height="17" fill="#024997"/><rect x="1040" y="192" width="17" height="17" fill="#024997"/><rect x="1056" y="192" width="17" height="17" fill="#024997"/><rect x="-32" y="208" width="17" height="17" fill="#026ed4"/><rect x="-16" y="208" width="17" height="17" fill="#026ed4"/><rect x="0" y="208" width="17" height="17" fill="#036fd4"/><rect x="16" y="208" width="17" height="17" fill="#0472d5"/><rect x="32" y="208" width="17" height="17" fill="#0575d5"/><rect x="48" y="208" width="17" height="17" fill="#0678d6"/><rect x="64" y="208" width="17" height="17" fill="#077bd7"/><rect x="80" y="208" width="17" height="17" fill="#077ed7"/><rect x="96" y="208" width="17" height="17" fill="#0881d8"/><rect x="112" y="208" width="17" height="17" fill="#0883d9"/><rect x="128" y="208" width="17" height="17" fill="#0985d9"/><rect x="144" y="208" width="17" height="17" fill="#0a87d9"/><rect x="160" y="208" width="17" height="17" fill="#0c89da"/><rect x="176" y="208" width="17" height="17" fill="#0e8bda"/><rect x="960" y="208" width="17" height="17" fill="#0350a1"/><rect x="976" y="208" width="17" height="17" fill="#034e9e"/><rect x="992" y="208" width="17" height="17" fill="#034c9c"/><rect x="1008" y="208" width="17" height="17" fill="#024b9a"/><rect x="1024" y="208" width="17" height="17" fill="#024a99"/><rect x="1040" y="208" width="17" height="17" fill="#024a99"/><rect x="1056" y="208" width="17" height="17" fill="#024a99"/><rect x="-32" y="224" width="17" height="17" fill="#0274d7"/><rect x="-16" y="224" width="17" height="17" fill="#0274d7"/><rect x="0" y="224" width="17" height="17" fill="#0375d8"/><rect x="16" y="224" width="17" height="17" fill="#0478d8"/><rect x="32" y="224" width="17" height="17" fill="#057bd9"/><rect x="48" y="224" width="17" height="17" fill="#067eda"/><rect x="64" y="224" width="17" height="17" fill="#0781da"/><rect x="80" y="224" width="17" height="17" fill="#0784db"/><rect x="96" y="224" width="17" height="17" fill="#0887db"/><rect x="112" y="224" width="17" height="17" fill="#098adc"/><rect x="128" y="224" width="17" height="17" fill="#0a8ddd"/><rect x="144" y="224" width="17" height="17" fill="#0b8fdd"/><rect x="160" y="224" width="17" height="17" fill="#0d91de"/><rect x="176" y="224" width="17" height="17" fill="#1092de"/><rect x="960" y="224" width="17" height="17" fill="#0351a3"/><rect x="976" y="224" width="17" height="17" fill="#034fa1"/><rect x="992" y="224" width="17" height="17" fill="#034d9f"/><rect x="1008" y="224" width="17" height="17" fill="#024c9d"/><rect x="1024" y="224" width="17" height="17" fill="#024b9c"/><rect x="1040" y="224" width="17" height="17" fill="#024b9c"/><rect x="1056" y="224" width="17" height="17" fill="#024b9c"/><rect x="-32" y="240" width="17" height="17" fill="#0279db"/><rect x="-16" y="240" width="17" height="17" fill="#0279db"/><rect x="0" y="240" width="17" height="17" fill="#037bdb"/><rect x="16" y="240" width="17" height="17" fill="#047edc"/><rect x="32" y="240" width="17" height="17" fill="#0581dc"/><rect x="48" y="240" width="17" height="17" fill="#0684dd"/><rect x="64" y="240" width="17" height="17" fill="#0788dd"/><rect x="80" y="240" width="17" height="17" fill="#078bde"/><rect x="96" y="240" width="17" height="17" fill="#088ede"/><rect x="112" y="240" width="17" height="17" fill="#0991df"/><rect x="128" y="240" width="17" height="17" fill="#0b94e0"/><rect x="144" y="240" width="17" height="17" fill="#0d97e1"/><rect x="160" y="240" width="17" height="17" fill="#0f99e1"/><rect x="176" y="240" width="17" height="17" fill="#139ae1"/><rect x="960" y="240" width="17" height="17" fill="#0352a5"/><rect x="976" y="240" width="17" height="17" fill="#0350a3"/><rect x="992" y="240" width="17" height="17" fill="#034fa1"/><rect x="1008" y="240" width="17" height="17" fill="#024d9f"/><rect x="1024" y="240" width="17" height="17" fill="#024d9e"/><rect x="1040" y="240" width="17" height="17" fill="#024d9e"/><rect x="1056" y="240" width="17" height="17" fill="#024d9e"/><rect x="-32" y="256" width="17" height="17" fill="#037fde"/><rect x="-16" y="256" width="17" height="17" fill="#037fde"/><rect x="0" y="256" width="17" height="17" fill="#0481de"/><rect x="16" y="256" width="17" height="17" fill="#0584df"/><rect x="32" y="256" width="17" height="17" fill="#0687df"/><rect x="48" y="256" width="17" height="17" fill="#078bdf"/><rect x="64" y="256" width="17" height="17" fill="#078ee0"/><rect x="80" y="256" width="17" height="17" fill="#0891e0"/><rect x="96" y="256" width="17" height="17" fill="#0995e1"/><rect x="112" y="256" width="17" height="17" fill="#0b98e2"/><rect x="128" y="256" width="17" height="17" fill="#0d9be3"/><rect x="144" y="256" width="17" height="17" fill="#0f9ee4"/><rect x="160" y="256" width="17" height="17" fill="#12a0e4"/><rect x="176" y="256" width="17" height="17" fill="#16a1e4"/><rect x="960" y="256" width="17" height="17" fill="#0354a8"/><rect x="976" y="256" width="17" height="17" fill="#0352a6"/><rect x="992" y="256" width="17" height="17" fill="#0250a3"/><rect x="1008" y="256" width="17" height="17" fill="#024fa1"/><rect x="1024" y="256" width="17" height="17" fill="#024ea0"/><rect x="1040" y="256" width="17" height="17" fill="#024ea0"/><rect x="1056" y="256" width="17" height="17" fill="#024ea0"/><rect x="-32" y="272" width="17" height="17" fill="#0485e1"/><rect x="-16" y="272" width="17" height="17" fill="#0485e1"/><rect x="0" y="272" width="17" height="17" fill="#0587e1"/><rect x="16" y="272" width="17" height="17" fill="#068ae1"/><rect x="32" y="272" width="17" height="17" fill="#078de2"/><rect x="48" y="272" width="17" height="17" fill="#0891e2"/><rect x="64" y="272" width="17" height="17" fill="#0994e2"/><rect x="80" y="272" width="17" height="17" fill="#0a98e3"/><rect x="96" y="272" width="17" height="17" fill="#0b9be3"/><rect x="112" y="272" width="17" height="17" fill="#0e9ee4"/><rect x="128" y="272" width="17" height="17" fill="#10a1e5"/><rect x="144" y="272" width="17" height="17" fill="#13a4e5"/><rect x="160" y="272" width="17" height="17" fill="#17a6e6"/><rect x="176" y="272" width="17" height="17" fill="#1ba8e6"/><rect x="960" y="272" width="17" height="17" fill="#0355aa"/><rect x="976" y="272" width="17" height="17" fill="#0353a8"/><rect x="992" y="272" width="17" height="17" fill="#0252a6"/><rect x="1008" y="272" width="17" height="17" fill="#0250a4"/><rect x="1024" y="272" width="17" height="17" fill="#024fa3"/><rect x="1040" y="272" width="17" height="17" fill="#024fa3"/><rect x="1056" y="272" width="17" height="17" fill="#024fa3"/><rect x="-32" y="288" width="17" height="17" fill="#058be3"/><rect x="-16" y="288" width="17" height="17" fill="#058be3"/><rect x="0" y="288" width="17" height="17" fill="#068de4"/><rect x="16" y="288" width="17" height="17" fill="#0890e4"/><rect x="32" y="288" width="17" height="17" fill="#0994e4"/><rect x="48" y="288" width="17" height="17" fill="#0a97e4"/><rect x="64" y="288" width="17" height="17" fill="#0b9be4"/><rect x="80" y="288" width="17" height="17" fill="#0c9ee4"/><rect x="96" y="288" width="17" height="17" fill="#0ea2e5"/><rect x="112" y="288" width="17" height="17" fill="#12a5e6"/><rect x="128" y="288" width="17" height="17" fill="#15a8e6"/><rect x="144" y="288" width="17" height="17" fill="#19aae6"/><rect x="160" y="288" width="17" height="17" fill="#1dace7"/><rect x="176" y="288" width="17" height="17" fill="#22aee7"/><rect x="960" y="288" width="17" height="17" fill="#0357ad"/><rect x="976" y="288" width="17" height="17" fill="#0355aa"/><rect x="992" y="288" width="17" height="17" fill="#0253a8"/><rect x="1008" y="288" width="17" height="17" fill="#0252a6"/><rect x="1024" y="288" width="17" height="17" fill="#0251a5"/><rect x="1040" y="288" width="17" height="17" fill="#0251a5"/><rect x="1056" y="288" width="17" height="17" fill="#0251a5"/><rect x="-32" y="304" width="17" height="17" fill="#0791e6"/><rect x="-16" y="304" width="17" height="17" fill="#0791e6"/><rect x="0" y="304" width="17" height="17" fill="#0893e6"/><rect x="16" y="304" width="17" height="17" fill="#0a96e6"/><rect x="32" y="304" width="17" height="17" fill="#0b9ae6"/><rect x="48" y="304" width="17" height="17" fill="#0c9ee6"/><rect x="64" y="304" width="17" height="17" fill="#0ea2e6"/><rect x="80" y="304" width="17" height="17" fill="#10a5e6"/><rect x="96" y="304" width="17" height="17" fill="#13a9e7"/><rect x="112" y="304" width="17" height="17" fill="#17ace7"/><rect x="128" y="304" width="17" height="17" fill="#1bafe8"/><rect x="144" y="304" width="17" height="17" fill="#20b1e8"/><rect x="160" y="304" width="17" height="17" fill="#24b3e8"/><rect x="176" y="304" width="17" height="17" fill="#29b5e9"/><rect x="960" y="304" width="17" height="17" fill="#0358af"/><rect x="976" y="304" width="17" height="17" fill="#0356ad"/><rect x="992" y="304" width="17" height="17" fill="#0255ab"/><rect x="1008" y="304" width="17" height="17" fill="#0253a8"/><rect x="1024" y="304" width="17" height="17" fill="#0252a7"/><rect x="1040" y="304" width="17" height="17" fill="#0252a7"/><rect x="1056" y="304" width="17" height="17" fill="#0252a7"/><rect x="-32" y="320" width="17" height="17" fill="#0897e8"/><rect x="-16" y="320" width="17" height="17" fill="#0897e8"/><rect x="0" y="320" width="17" height="17" fill="#0a99e8"/><rect x="16" y="320" width="17" height="17" fill="#0c9de8"/><rect x="32" y="320" width="17" height="17" fill="#0ea1e8"/><rect x="48" y="320" width="17" height="17" fill="#0fa5e8"/><rect x="64" y="320" width="17" height="17" fill="#12a9e8"/><rect x="80" y="320" width="17" height="17" fill="#15ade8"/><rect x="96" y="320" width="17" height="17" fill="#19b0e9"/><rect x="112" y="320" width="17" height="17" fill="#1eb4ea"/><rect x="128" y="320" width="17" height="17" fill="#23b7ea"/><rect x="144" y="320" width="17" height="17" fill="#28baeb"/><rect x="160" y="320" width="17" height="17" fill="#2dbceb"/><rect x="176" y="320" width="17" height="17" fill="#33bdec"/><rect x="960" y="320" width="17" height="17" fill="#035ab1"/><rect x="976" y="320" width="17" height="17" fill="#0258af"/><rect x="992" y="320" width="17" height="17" fill="#0256ad"/><rect x="1008" y="320" width="17" height="17" fill="#0255ab"/><rect x="1024" y="320" width="17" height="17" fill="#0154aa"/><rect x="1040" y="320" width="17" height="17" fill="#0154aa"/><rect x="1056" y="320" width="17" height="17" fill="#0154aa"/><rect x="-32" y="336" width="17" height="17" fill="#0a9de9"/><rect x="-16" y="336" width="17" height="17" fill="#0a9de9"/><rect x="0" y="336" width="17" height="17" fill="#0b9fe9"/><rect x="16" y="336" width="17" height="17" fill="#0ea3ea"/><rect x="32" y="336" width="17" height="17" fill="#11a7ea"/><rect x="48" y="336" width="17" height="17" fill="#13abea"/><rect x="64" y="336" width="17" height="17" fill="#17b0ea"/><rect x="80" y="336" width="17" height="17" fill="#1bb4ea"/><rect x="96" y="336" width="17" height="17" fill="#20b8eb"/><rect x="112" y="336" width="17" height="17" fill="#26bcec"/><rect x="128" y="336" width="17" height="17" fill="#2cc0ed"/><rect x="144" y="336" width="17" height="17" fill="#31c3ed"/><rect x="160" y="336" width="17" height="17" fill="#37c5ee"/><rect x="176" y="336" width="17" height="17" fill="#3dc6ee"/><rect x="960" y="336" width="17" height="17" fill="#035bb4"/><rect x="976" y="336" width="17" height="17" fill="#0259b2"/><rect x="992" y="336" width="17" height="17" fill="#0258af"/><rect x="1008" y="336" width="17" height="17" fill="#0156ad"/><rect x="1024" y="336" width="17" height="17" fill="#0155ac"/><rect x="1040" y="336" width="17" height="17" fill="#0155ac"/><rect x="1056" y="336" width="17" height="17" fill="#0155ac"/><rect x="-32" y="352" width="17" height="17" fill="#0ba3ea"/><rect x="-16" y="352" width="17" height="17" fill="#0ba3ea"/><rect x="0" y="352" width="17" height="17" fill="#0da5ea"/><rect x="16" y="352" width="17" height="17" fill="#10a9eb"/><rect x="32" y="352" width="17" height="17" fill="#14aeeb"/><rect x="48" y="352" width="17" height="17" fill="#18b2eb"/><rect x="64" y="352" width="17" height="17" fill="#1cb6ec"/><rect x="80" y="352" width="17" height="17" fill="#22bbec"/><rect x="96" y="352" width="17" height="17" fill="#28bfed"/><rect x="112" y="352" width="17" height="17" fill="#2fc4ee"/><rect x="128" y="352" width="17" height="17" fill="#36c8ef"/><rect x="144" y="352" width="17" height="17" fill="#3dcbf0"/><rect x="160" y="352" width="17" height="17" fill="#43cdf0"/><rect x="176" y="352" width="17" height="17" fill="#49cdf0"/><rect x="960" y="352" width="17" height="17" fill="#035cb6"/><rect x="976" y="352" width="17" height="17" fill="#025bb4"/><rect x="992" y="352" width="17" height="17" fill="#0259b2"/><rect x="1008" y="352" width="17" height="17" fill="#0157af"/><rect x="1024" y="352" width="17" height="17" fill="#0156ae"/><rect x="1040" y="352" width="17" height="17" fill="#0156ae"/><rect x="1056" y="352" width="17" height="17" fill="#0156ae"/><rect x="-32" y="368" width="17" height="17" fill="#0da9eb"/><rect x="-16" y="368" width="17" height="17" fill="#0da9eb"/><rect x="0" y="368" width="17" height="17" fill="#0fabec"/><rect x="16" y="368" width="17" height="17" fill="#14afec"/><rect x="32" y="368" width="17" height="17" fill="#18b4ec"/><rect x="48" y="368" width="17" height="17" fill="#1db8ec"/><rect x="64" y="368" width="17" height="17" fill="#22bded"/><rect x="80" y="368" width="17" height="17" fill="#29c1ed"/><rect x="96" y="368" width="17" height="17" fill="#31c6ee"/><rect x="112" y="368" width="17" height="17" fill="#3acaef"/><rect x="128" y="368" width="17" height="17" fill="#43cef0"/><rect x="144" y="368" width="17" height="17" fill="#4bd1f1"/><rect x="160" y="368" width="17" height="17" fill="#51d3f2"/><rect x="176" y="368" width="17" height="17" fill="#56d4f2"/><rect x="960" y="368" width="17" height="17" fill="#035eb9"/><rect x="976" y="368" width="17" height="17" fill="#025cb6"/><rect x="992" y="368" width="17" height="17" fill="#025ab4"/><rect x="1008" y="368" width="17" height="17" fill="#0158b2"/><rect x="1024" y="368" width="17" height="17" fill="#0158b1"/><rect x="1040" y="368" width="17" height="17" fill="#0158b1"/><rect x="1056" y="368" width="17" height="17" fill="#0158b1"/><rect x="-32" y="384" width="17" height="17" fill="#0faeec"/><rect x="-16" y="384" width="17" height="17" fill="#0faeec"/><rect x="0" y="384" width="17" height="17" fill="#12b1ec"/><rect x="16" y="384" width="17" height="17" fill="#18b5ed"/><rect x="32" y="384" width="17" height="17" fill="#1dbaed"/><rect x="48" y="384" width="17" height="17" fill="#23bfee"/><rect x="64" y="384" width="17" height="17" fill="#2ac3ee"/><rect x="80" y="384" width="17" height="17" fill="#32c8ef"/><rect x="96" y="384" width="17" height="17" fill="#3bccf0"/><rect x="112" y="384" width="17" height="17" fill="#46d0f1"/><rect x="128" y="384" width="17" height="17" fill="#50d4f2"/><rect x="144" y="384" width="17" height="17" fill="#59d7f3"/><rect x="160" y="384" width="17" height="17" fill="#60d8f3"/><rect x="176" y="384" width="17" height="17" fill="#64d9f3"/><rect x="960" y="384" width="17" height="17" fill="#035fbb"/><rect x="976" y="384" width="17" height="17" fill="#025db9"/><rect x="992" y="384" width="17" height="17" fill="#025bb6"/><rect x="1008" y="384" width="17" height="17" fill="#0159b4"/><rect x="1024" y="384" width="17" height="17" fill="#0159b3"/><rect x="1040" y="384" width="17" height="17" fill="#0159b3"/><rect x="1056" y="384" width="17" height="17" fill="#0159b3"/><rect x="-32" y="400" width="17" height="17" fill="#13b4ed"/><rect x="-16" y="400" width="17" height="17" fill="#13b4ed"/><rect x="0" y="400" width="17" height="17" fill="#16b6ed"/><rect x="16" y="400" width="17" height="17" fill="#1dbbee"/><rect x="32" y="400" width="17" height="17" fill="#23c0ee"/><rect x="48" y="400" width="17" height="17" fill="#2bc4ef"/><rect x="64" y="400" width="17" height="17" fill="#32c9ef"/><rect x="80" y="400" width="17" height="17" fill="#3bcdf0"/><rect x="96" y="400" width="17" height="17" fill="#47d2f1"/><rect x="112" y="400" width="17" height="17" fill="#52d6f2"/><rect x="128" y="400" width="17" height="17" fill="#5ed9f3"/><rect x="144" y="400" width="17" height="17" fill="#67dcf3"/><rect x="160" y="400" width="17" height="17" fill="#6dddf4"/><rect x="176" y="400" width="17" height="17" fill="#71def4"/><rect x="960" y="400" width="17" height="17" fill="#0360bd"/><rect x="976" y="400" width="17" height="17" fill="#025ebb"/><rect x="992" y="400" width="17" height="17" fill="#015cb9"/><rect x="1008" y="400" width="17" height="17" fill="#015ab6"/><rect x="1024" y="400" width="17" height="17" fill="#015ab5"/><rect x="1040" y="400" width="17" height="17" fill="#015ab5"/><rect x="1056" y="400" width="17" height="17" fill="#015ab5"/><rect x="-32" y="416" width="17" height="17" fill="#17b9ee"/><rect x="-16" y="416" width="17" height="17" fill="#17b9ee"/><rect x="0" y="416" width="17" height="17" fill="#1bbbee"/><rect x="16" y="416" width="17" height="17" fill="#23c0ef"/><rect x="32" y="416" width="17" height="17" fill="#2bc5ef"/><rect x="48" y="416" width="17" height="17" fill="#34caf0"/><rect x="64" y="416" width="17" height="17" fill="#3dcff1"/><rect x="80" y="416" width="17" height="17" fill="#48d3f1"/><rect x="96" y="416" width="17" height="17" fill="#54d7f2"/><rect x="112" y="416" width="17" height="17" fill="#5fdbf3"/><rect x="128" y="416" width="17" height="17" fill="#6adef4"/><rect x="144" y="416" width="17" height="17" fill="#73e0f4"/><rect x="160" y="416" width="17" height="17" fill="#79e1f5"/><rect x="176" y="416" width="17" height="17" fill="#7de2f5"/><rect x="960" y="416" width="17" height="17" fill="#0261bf"/><rect x="976" y="416" width="17" height="17" fill="#025fbd"/><rect x="992" y="416" width="17" height="17" fill="#015dbb"/><rect x="1008" y="416" width="17" height="17" fill="#015bb8"/><rect x="1024" y="416" width="17" height="17" fill="#015ab7"/><rect x="1040" y="416" width="17" height="17" fill="#015ab7"/><rect x="1056" y="416" width="17" height="17" fill="#015ab7"/><rect x="-32" y="432" width="17" height="17" fill="#1cbeef"/><rect x="-16" y="432" width="17" height="17" fill="#1cbeef"/><rect x="0" y="432" width="17" height="17" fill="#20c0ef"/><rect x="16" y="432" width="17" height="17" fill="#2ac5f0"/><rect x="32" y="432" width="17" height="17" fill="#34caf1"/><rect x="48" y="432" width="17" height="17" fill="#3ecff1"/><rect x="64" y="432" width="17" height="17" fill="#49d4f2"/><rect x="80" y="432" width="17" height="17" fill="#55d8f3"/><rect x="96" y="432" width="17" height="17" fill="#61dcf3"/><rect x="112" y="432" width="17" height="17" fill="#6cdff4"/><rect x="128" y="432" width="17" height="17" fill="#77e2f4"/><rect x="144" y="432" width="17" height="17" fill="#7fe4f5"/><rect x="160" y="432" width="17" height="17" fill="#84e5f5"/><rect x="176" y="432" width="17" height="17" fill="#87e5f5"/><rect x="960" y="432" width="17" height="17" fill="#0262c1"/><rect x="976" y="432" width="17" height="17" fill="#0260bf"/><rect x="992" y="432" width="17" height="17" fill="#015ebd"/><rect x="1008" y="432" width="17" height="17" fill="#015cbb"/><rect x="1024" y="432" width="17" height="17" fill="#015bba"/><rect x="1040" y="432" width="17" height="17" fill="#015bba"/><rect x="1056" y="432" width="17" height="17" fill="#015bba"/><rect x="-32" y="448" width="17" height="17" fill="#22c2f0"/><rect x="-16" y="448" width="17" height="17" fill="#22c2f0"/><rect x="0" y="448" width="17" height="17" fill="#27c5f0"/><rect x="16" y="448" width="17" height="17" fill="#32caf1"/><rect x="32" y="448" width="17" height="17" fill="#3dcff2"/><rect x="48" y="448" width="17" height="17" fill="#49d4f3"/><rect x="64" y="448" width="17" height="17" fill="#55d9f3"/><rect x="80" y="448" width="17" height="17" fill="#61ddf4"/><rect x="96" y="448" width="17" height="17" fill="#6ee0f5"/><rect x="112" y="448" width="17" height="17" fill="#79e3f5"/><rect x="128" y="448" width="17" height="17" fill="#83e6f5"/><rect x="144" y="448" width="17" height="17" fill="#8ae7f5"/><rect x="160" y="448" width="17" height="17" fill="#8fe8f6"/><rect x="176" y="448" width="17" height="17" fill="#91e8f6"/><rect x="960" y="448" width="17" height="17" fill="#0263c4"/><rect x="976" y="448" width="17" height="17" fill="#0261c1"/><rect x="992" y="448" width="17" height="17" fill="#015fbf"/><rect x="1008" y="448" width="17" height="17" fill="#015dbd"/><rect x="1024" y="448" width="17" height="17" fill="#005cbc"/><rect x="1040" y="448" width="17" height="17" fill="#005cbc"/><rect x="1056" y="448" width="17" height="17" fill="#005cbc"/><rect x="-32" y="464" width="17" height="17" fill="#28c7f1"/><rect x="-16" y="464" width="17" height="17" fill="#28c7f1"/><rect x="0" y="464" width="17" height="17" fill="#2ec9f1"/><rect x="16" y="464" width="17" height="17" fill="#3acff2"/><rect x="32" y="464" width="17" height="17" fill="#47d4f3"/><rect x="48" y="464" width="17" height="17" fill="#54d9f4"/><rect x="64" y="464" width="17" height="17" fill="#61ddf5"/><rect x="80" y="464" width="17" height="17" fill="#6de1f5"/><rect x="96" y="464" width="17" height="17" fill="#7ae4f6"/><rect x="112" y="464" width="17" height="17" fill="#85e7f6"/><rect x="128" y="464" width="17" height="17" fill="#8ee9f6"/><rect x="144" y="464" width="17" height="17" fill="#95eaf6"/><rect x="160" y="464" width="17" height="17" fill="#99eaf6"/><rect x="176" y="464" width="17" height="17" fill="#99eaf6"/><rect x="960" y="464" width="17" height="17" fill="#0263c6"/><rect x="976" y="464" width="17" height="17" fill="#0161c3"/><rect x="992" y="464" width="17" height="17" fill="#015fc1"/><rect x="1008" y="464" width="17" height="17" fill="#005ebf"/><rect x="1024" y="464" width="17" height="17" fill="#005dbe"/><rect x="1040" y="464" width="17" height="17" fill="#005dbe"/><rect x="1056" y="464" width="17" height="17" fill="#005dbe"/><rect x="-32" y="480" width="17" height="17" fill="#2ecaf2"/><rect x="-16" y="480" width="17" height="17" fill="#2ecaf2"/><rect x="0" y="480" width="17" height="17" fill="#34cdf2"/><rect x="16" y="480" width="17" height="17" fill="#42d3f3"/><rect x="32" y="480" width="17" height="17" fill="#50d8f4"/><rect x="48" y="480" width="17" height="17" fill="#5eddf5"/><rect x="64" y="480" width="17" height="17" fill="#6be1f6"/><rect x="80" y="480" width="17" height="17" fill="#78e5f7"/><rect x="96" y="480" width="17" height="17" fill="#84e8f7"/><rect x="112" y="480" width="17" height="17" fill="#8feaf7"/><rect x="128" y="480" width="17" height="17" fill="#98ebf7"/><rect x="144" y="480" width="17" height="17" fill="#9eecf7"/><rect x="160" y="480" width="17" height="17" fill="#a1ecf7"/><rect x="176" y="480" width="17" height="17" fill="#9febf7"/><rect x="960" y="480" width="17" height="17" fill="#0264c8"/><rect x="976" y="480" width="17" height="17" fill="#0162c5"/><rect x="992" y="480" width="17" height="17" fill="#0160c3"/><rect x="1008" y="480" width="17" height="17" fill="#005ec1"/><rect x="1024" y="480" width="17" height="17" fill="#005dbf"/><rect x="1040" y="480" width="17" height="17" fill="#005dbf"/><rect x="1056" y="480" width="17" height="17" fill="#005dbf"/><rect x="-32" y="496" width="17" height="17" fill="#33cef3"/><rect x="-16" y="496" width="17" height="17" fill="#33cef3"/><rect x="0" y="496" width="17" height="17" fill="#3ad0f3"/><rect x="16" y="496" width="17" height="17" fill="#49d6f4"/><rect x="32" y="496" width="17" height="17" fill="#58dbf5"/><rect x="48" y="496" width="17" height="17" fill="#67e0f6"/><rect x="64" y="496" width="17" height="17" fill="#75e4f7"/><rect x="80" y="496" width="17" height="17" fill="#81e8f8"/><rect x="96" y="496" width="17" height="17" fill="#8ceaf8"/><rect x="112" y="496" width="17" height="17" fill="#96ecf8"/><rect x="128" y="496" width="17" height="17" fill="#9eedf8"/><rect x="144" y="496" width="17" height="17" fill="#a4edf7"/><rect x="160" y="496" width="17" height="17" fill="#a5edf7"/><rect x="176" y="496" width="17" height="17" fill="#a2ecf7"/><rect x="960" y="496" width="17" height="17" fill="#0265c9"/><rect x="976" y="496" width="17" height="17" fill="#0163c7"/><rect x="992" y="496" width="17" height="17" fill="#0061c5"/><rect x="1008" y="496" width="17" height="17" fill="#005fc2"/><rect x="1024" y="496" width="17" height="17" fill="#005ec1"/><rect x="1040" y="496" width="17" height="17" fill="#005ec1"/><rect x="1056" y="496" width="17" height="17" fill="#005ec1"/><rect x="-32" y="512" width="17" height="17" fill="#38d0f4"/><rect x="-16" y="512" width="17" height="17" fill="#38d0f4"/><rect x="0" y="512" width="17" height="17" fill="#40d3f4"/><rect x="16" y="512" width="17" height="17" fill="#4fd9f5"/><rect x="32" y="512" width="17" height="17" fill="#5fdef6"/><rect x="48" y="512" width="17" height="17" fill="#6fe3f7"/><rect x="64" y="512" width="17" height="17" fill="#7de7f7"/><rect x="80" y="512" width="17" height="17" fill="#89eaf8"/><rect x="96" y="512" width="17" height="17" fill="#92edf8"/><rect x="112" y="512" width="17" height="17" fill="#9aeef8"/><rect x="128" y="512" width="17" height="17" fill="#9feff8"/><rect x="144" y="512" width="17" height="17" fill="#a2eff8"/><rect x="160" y="512" width="17" height="17" fill="#a2eef8"/><rect x="176" y="512" width="17" height="17" fill="#9fedf8"/><rect x="960" y="512" width="17" height="17" fill="#0165cb"/><rect x="976" y="512" width="17" height="17" fill="#0163c9"/><rect x="992" y="512" width="17" height="17" fill="#0061c6"/><rect x="1008" y="512" width="17" height="17" fill="#005fc4"/><rect x="1024" y="512" width="17" height="17" fill="#005ec3"/><rect x="1040" y="512" width="17" height="17" fill="#005ec3"/><rect x="1056" y="512" width="17" height="17" fill="#005ec3"/><rect x="-32" y="528" width="17" height="17" fill="#3cd2f4"/><rect x="-16" y="528" width="17" height="17" fill="#3cd2f4"/><rect x="0" y="528" width="17" height="17" fill="#44d5f5"/><rect x="16" y="528" width="17" height="17" fill="#55dbf5"/><rect x="32" y="528" width="17" height="17" fill="#66e0f6"/><rect x="48" y="528" width="17" height="17" fill="#76e5f7"/><rect x="64" y="528" width="17" height="17" fill="#84e9f7"/><rect x="80" y="528" width="17" height="17" fill="#8fecf8"/><rect x="96" y="528" width="17" height="17" fill="#97eef8"/><rect x="112" y="528" width="17" height="17" fill="#9beff8"/><rect x="128" y="528" width="17" height="17" fill="#9df0f8"/><rect x="144" y="528" width="17" height="17" fill="#9df0f8"/><rect x="160" y="528" width="17" height="17" fill="#9ceff8"/><rect x="176" y="528" width="17" height="17" fill="#9aedf8"/><rect x="960" y="528" width="17" height="17" fill="#0166cd"/><rect x="976" y="528" width="17" height="17" fill="#0164ca"/><rect x="992" y="528" width="17" height="17" fill="#0062c8"/><rect x="1008" y="528" width="17" height="17" fill="#0060c6"/><rect x="1024" y="528" width="17" height="17" fill="#005fc5"/><rect x="1040" y="528" width="17" height="17" fill="#005fc5"/><rect x="1056" y="528" width="17" height="17" fill="#005fc5"/><rect x="-32" y="544" width="17" height="17" fill="#3ed4f5"/><rect x="-16" y="544" width="17" height="17" fill="#3ed4f5"/><rect x="0" y="544" width="17" height="17" fill="#47d7f5"/><rect x="16" y="544" width="17" height="17" fill="#59ddf6"/><rect x="32" y="544" width="17" height="17" fill="#6be2f6"/><rect x="48" y="544" width="17" height="17" fill="#7ce7f7"/><rect x="64" y="544" width="17" height="17" fill="#8bebf7"/><rect x="80" y="544" width="17" height="17" fill="#95eef7"/><rect x="96" y="544" width="17" height="17" fill="#9beff8"/><rect x="112" y="544" width="17" height="17" fill="#9df0f8"/><rect x="128" y="544" width="17" height="17" fill="#9cf0f8"/><rect x="144" y="544" width="17" height="17" fill="#97f0f8"/><rect x="160" y="544" width="17" height="17" fill="#96eff8"/><rect x="176" y="544" width="17" height="17" fill="#95edf8"/><rect x="960" y="544" width="17" height="17" fill="#0166ce"/><rect x="976" y="544" width="17" height="17" fill="#0064cc"/><rect x="992" y="544" width="17" height="17" fill="#0062ca"/><rect x="1008" y="544" width="17" height="17" fill="#0060c7"/><rect x="1024" y="544" width="17" height="17" fill="#005fc6"/><rect x="1040" y="544" width="17" height="17" fill="#005fc6"/><rect x="1056" y="544" width="17" height="17" fill="#005fc6"/><rect x="-32" y="560" width="17" height="17" fill="#40d5f5"/><rect x="-16" y="560" width="17" height="17" fill="#40d5f5"/><rect x="0" y="560" width="17" height="17" fill="#49d8f6"/><rect x="16" y="560" width="17" height="17" fill="#5ddef6"/><rect x="32" y="560" width="17" height="17" fill="#70e3f7"/><rect x="48" y="560" width="17" height="17" fill="#82e8f7"/><rect x="64" y="560" width="17" height="17" fill="#91ecf7"/><rect x="80" y="560" width="17" height="17" fill="#9ceff7"/><rect x="96" y="560" width="17" height="17" fill="#a1f0f7"/><rect x="112" y="560" width="17" height="17" fill="#a1f1f7"/><rect x="128" y="560" width="17" height="17" fill="#9ef0f8"/><rect x="144" y="560" width="17" height="17" fill="#98eff8"/><rect x="160" y="560" width="17" height="17" fill="#95eef8"/><rect x="176" y="560" width="17" height="17" fill="#93ecf8"/><rect x="960" y="560" width="17" height="17" fill="#0166d0"/><rect x="976" y="560" width="17" height="17" fill="#0064cd"/><rect x="992" y="560" width="17" height="17" fill="#0062cb"/><rect x="1008" y="560" width="17" height="17" fill="#0060c8"/><rect x="1024" y="560" width="17" height="17" fill="#005fc7"/><rect x="1040" y="560" width="17" height="17" fill="#005fc7"/><rect x="1056" y="560" width="17" height="17" fill="#005fc7"/><rect x="-32" y="576" width="17" height="17" fill="#41d6f6"/><rect x="-16" y="576" width="17" height="17" fill="#41d6f6"/><rect x="0" y="576" width="17" height="17" fill="#4ad9f6"/><rect x="16" y="576" width="17" height="17" fill="#5fdff7"/><rect x="32" y="576" width="17" height="17" fill="#74e4f7"/><rect x="48" y="576" width="17" height="17" fill="#87e9f7"/><rect x="64" y="576" width="17" height="17" fill="#98ecf7"/><rect x="80" y="576" width="17" height="17" fill="#a2eff7"/><rect x="96" y="576" width="17" height="17" fill="#a7f0f7"/><rect x="112" y="576" width="17" height="17" fill="#a6f0f7"/><rect x="128" y="576" width="17" height="17" fill="#a2f0f7"/><rect x="144" y="576" width="17" height="17" fill="#9ceef8"/><rect x="160" y="576" width="17" height="17" fill="#98edf8"/><rect x="176" y="576" width="17" height="17" fill="#94ebf8"/><rect x="960" y="576" width="17" height="17" fill="#0167d1"/><rect x="976" y="576" width="17" height="17" fill="#0065ce"/><rect x="992" y="576" width="17" height="17" fill="#0062cc"/><rect x="1008" y="576" width="17" height="17" fill="#0061c9"/><rect x="1024" y="576" width="17" height="17" fill="#0060c8"/><rect x="1040" y="576" width="17" height="17" fill="#0060c8"/><rect x="1056" y="576" width="17" height="17" fill="#0060c8"/><rect x="-32" y="592" width="17" height="17" fill="#40d6f7"/><rect x="-16" y="592" width="17" height="17" fill="#40d6f7"/><rect x="0" y="592" width="17" height="17" fill="#4ad9f7"/><rect x="16" y="592" width="17" height="17" fill="#5fdef7"/><rect x="32" y="592" width="17" height="17" fill="#75e4f7"/><rect x="48" y="592" width="17" height="17" fill="#8ae9f7"/><rect x="64" y="592" width="17" height="17" fill="#9cecf6"/><rect x="80" y="592" width="17" height="17" fill="#a8eff6"/><rect x="96" y="592" width="17" height="17" fill="#acf0f6"/><rect x="112" y="592" width="17" height="17" fill="#abf0f7"/><rect x="128" y="592" width="17" height="17" fill="#a6eff7"/><rect x="144" y="592" width="17" height="17" fill="#a0edf8"/><rect x="160" y="592" width="17" height="17" fill="#9bebf8"/><rect x="176" y="592" width="17" height="17" fill="#95e9f8"/><rect x="960" y="592" width="17" height="17" fill="#0167d2"/><rect x="976" y="592" width="17" height="17" fill="#0065cf"/><rect x="992" y="592" width="17" height="17" fill="#0063cd"/><rect x="1008" y="592" width="17" height="17" fill="#0061ca"/><rect x="1024" y="592" width="17" height="17" fill="#0060c9"/><rect x="1040" y="592" width="17" height="17" fill="#0060c9"/><rect x="1056" y="592" width="17" height="17" fill="#0060c9"/><rect x="-32" y="608" width="17" height="17" fill="#3cd5f7"/><rect x="-16" y="608" width="17" height="17" fill="#3cd5f7"/><rect x="0" y="608" width="17" height="17" fill="#46d8f7"/><rect x="16" y="608" width="17" height="17" fill="#5cddf7"/><rect x="32" y="608" width="17" height="17" fill="#72e3f7"/><rect x="48" y="608" width="17" height="17" fill="#88e8f7"/><rect x="64" y="608" width="17" height="17" fill="#9cecf6"/><rect x="80" y="608" width="17" height="17" fill="#aaeef6"/><rect x="96" y="608" width="17" height="17" fill="#aeeff6"/><rect x="112" y="608" width="17" height="17" fill="#aceff6"/><rect x="128" y="608" width="17" height="17" fill="#a8eef6"/><rect x="144" y="608" width="17" height="17" fill="#a3ecf7"/><rect x="160" y="608" width="17" height="17" fill="#9ceaf7"/><rect x="176" y="608" width="17" height="17" fill="#95e8f7"/><rect x="960" y="608" width="17" height="17" fill="#0167d2"/><rect x="976" y="608" width="17" height="17" fill="#0065d0"/><rect x="992" y="608" width="17" height="17" fill="#0063cd"/><rect x="1008" y="608" width="17" height="17" fill="#0061cb"/><rect x="1024" y="608" width="17" height="17" fill="#0060ca"/><rect x="1040" y="608" width="17" height="17" fill="#0060ca"/><rect x="1056" y="608" width="17" height="17" fill="#0060ca"/><rect x="-32" y="624" width="17" height="17" fill="#37d2f7"/><rect x="-16" y="624" width="17" height="17" fill="#37d2f7"/><rect x="0" y="624" width="17" height="17" fill="#40d5f8"/><rect x="16" y="624" width="17" height="17" fill="#55dbf8"/><rect x="32" y="624" width="17" height="17" fill="#6be0f7"/><rect x="48" y="624" width="17" height="17" fill="#81e5f6"/><rect x="64" y="624" width="17" height="17" fill="#95e9f6"/><rect x="80" y="624" width="17" height="17" fill="#a2ecf5"/><rect x="96" y="624" width="17" height="17" fill="#a8edf5"/><rect x="112" y="624" width="17" height="17" fill="#a9edf5"/><rect x="128" y="624" width="17" height="17" fill="#a6ecf5"/><rect x="144" y="624" width="17" height="17" fill="#a2ebf6"/><rect x="160" y="624" width="17" height="17" fill="#9ce9f6"/><rect x="176" y="624" width="17" height="17" fill="#94e7f6"/><rect x="960" y="624" width="17" height="17" fill="#0167d3"/><rect x="976" y="624" width="17" height="17" fill="#0065d0"/><rect x="992" y="624" width="17" height="17" fill="#0063ce"/><rect x="1008" y="624" width="17" height="17" fill="#0061cb"/><rect x="1024" y="624" width="17" height="17" fill="#0060ca"/><rect x="1040" y="624" width="17" height="17" fill="#0060ca"/><rect x="1056" y="624" width="17" height="17" fill="#0060ca"/><rect x="-32" y="640" width="17" height="17" fill="#30cff7"/><rect x="-16" y="640" width="17" height="17" fill="#30cff7"/><rect x="0" y="640" width="17" height="17" fill="#39d2f7"/><rect x="16" y="640" width="17" height="17" fill="#4dd7f7"/><rect x="32" y="640" width="17" height="17" fill="#61ddf7"/><rect x="48" y="640" width="17" height="17" fill="#75e1f6"/><rect x="64" y="640" width="17" height="17" fill="#87e6f6"/><rect x="80" y="640" width="17" height="17" fill="#94e9f5"/><rect x="96" y="640" width="17" height="17" fill="#9ceaf5"/><rect x="112" y="640" width="17" height="17" fill="#a0ebf5"/><rect x="128" y="640" width="17" height="17" fill="#a0ebf4"/><rect x="144" y="640" width="17" height="17" fill="#9ee9f4"/><rect x="160" y="640" width="17" height="17" fill="#98e8f5"/><rect x="176" y="640" width="17" height="17" fill="#91e5f5"/><rect x="960" y="640" width="17" height="17" fill="#0167d3"/><rect x="976" y="640" width="17" height="17" fill="#0165d0"/><rect x="992" y="640" width="17" height="17" fill="#0163ce"/><rect x="1008" y="640" width="17" height="17" fill="#0061cb"/><rect x="1024" y="640" width="17" height="17" fill="#0060ca"/><rect x="1040" y="640" width="17" height="17" fill="#0060ca"/><rect x="1056" y="640" width="17" height="17" fill="#0060ca"/><rect x="-32" y="656" width="17" height="17" fill="#29caf5"/><rect x="-16" y="656" width="17" height="17" fill="#29caf5"/><rect x="0" y="656" width="17" height="17" fill="#31cdf6"/><rect x="16" y="656" width="17" height="17" fill="#42d2f6"/><rect x="32" y="656" width="17" height="17" fill="#54d8f6"/><rect x="48" y="656" width="17" height="17" fill="#65ddf6"/><rect x="64" y="656" width="17" height="17" fill="#75e1f6"/><rect x="80" y="656" width="17" height="17" fill="#82e4f5"/><rect x="96" y="656" width="17" height="17" fill="#8ce7f5"/><rect x="112" y="656" width="17" height="17" fill="#93e8f4"/><rect x="128" y="656" width="17" height="17" fill="#97e8f4"/><rect x="144" y="656" width="17" height="17" fill="#97e7f3"/><rect x="160" y="656" width="17" height="17" fill="#92e6f4"/><rect x="176" y="656" width="17" height="17" fill="#8be3f4"/><rect x="960" y="656" width="17" height="17" fill="#0167d3"/><rect x="976" y="656" width="17" height="17" fill="#0165d0"/><rect x="992" y="656" width="17" height="17" fill="#0163ce"/><rect x="1008" y="656" width="17" height="17" fill="#0161cb"/><rect x="1024" y="656" width="17" height="17" fill="#0160ca"/><rect x="1040" y="656" width="17" height="17" fill="#0160ca"/><rect x="1056" y="656" width="17" height="17" fill="#0160ca"/><rect x="-32" y="672" width="17" height="17" fill="#21c4f4"/><rect x="-16" y="672" width="17" height="17" fill="#21c4f4"/><rect x="0" y="672" width="17" height="17" fill="#28c7f4"/><rect x="16" y="672" width="17" height="17" fill="#37ccf5"/><rect x="32" y="672" width="17" height="17" fill="#46d2f5"/><rect x="48" y="672" width="17" height="17" fill="#54d7f6"/><rect x="64" y="672" width="17" height="17" fill="#62dcf6"/><rect x="80" y="672" width="17" height="17" fill="#6fe0f5"/><rect x="96" y="672" width="17" height="17" fill="#7ae2f5"/><rect x="112" y="672" width="17" height="17" fill="#84e4f4"/><rect x="128" y="672" width="17" height="17" fill="#8ae5f3"/><rect x="144" y="672" width="17" height="17" fill="#8de5f3"/><rect x="160" y="672" width="17" height="17" fill="#8ae3f3"/><rect x="176" y="672" width="17" height="17" fill="#83e1f4"/><rect x="960" y="672" width="17" height="17" fill="#0167d3"/><rect x="976" y="672" width="17" height="17" fill="#0165d0"/><rect x="992" y="672" width="17" height="17" fill="#0163ce"/><rect x="1008" y="672" width="17" height="17" fill="#0161cb"/><rect x="1024" y="672" width="17" height="17" fill="#0160ca"/><rect x="1040" y="672" width="17" height="17" fill="#0160ca"/><rect x="1056" y="672" width="17" height="17" fill="#0160ca"/><rect x="-32" y="688" width="17" height="17" fill="#18bef2"/><rect x="-16" y="688" width="17" height="17" fill="#18bef2"/><rect x="0" y="688" width="17" height="17" fill="#1fc1f2"/><rect x="16" y="688" width="17" height="17" fill="#2bc6f3"/><rect x="32" y="688" width="17" height="17" fill="#37ccf4"/><rect x="48" y="688" width="17" height="17" fill="#43d1f5"/><rect x="64" y="688" width="17" height="17" fill="#4ed6f6"/><rect x="80" y="688" width="17" height="17" fill="#5adbf6"/><rect x="96" y="688" width="17" height="17" fill="#68def5"/><rect x="112" y="688" width="17" height="17" fill="#74e0f4"/><rect x="128" y="688" width="17" height="17" fill="#7de1f3"/><rect x="144" y="688" width="17" height="17" fill="#81e2f2"/><rect x="160" y="688" width="17" height="17" fill="#80e0f2"/><rect x="176" y="688" width="17" height="17" fill="#7adef3"/><rect x="192" y="688" width="17" height="17" fill="#70daf4"/><rect x="208" y="688" width="17" height="17" fill="#64d7f5"/><rect x="224" y="688" width="17" height="17" fill="#59d3f7"/><rect x="240" y="688" width="17" height="17" fill="#4fcff7"/><rect x="256" y="688" width="17" height="17" fill="#47cbf8"/><rect x="272" y="688" width="17" height="17" fill="#40c8f8"/><rect x="288" y="688" width="17" height="17" fill="#3bc5f8"/><rect x="304" y="688" width="17" height="17" fill="#37c2f7"/><rect x="320" y="688" width="17" height="17" fill="#34bff7"/><rect x="336" y="688" width="17" height="17" fill="#31bcf6"/><rect x="352" y="688" width="17" height="17" fill="#2ebaf5"/><rect x="368" y="688" width="17" height="17" fill="#2cb7f5"/><rect x="384" y="688" width="17" height="17" fill="#2bb5f4"/><rect x="400" y="688" width="17" height="17" fill="#29b3f4"/><rect x="416" y="688" width="17" height="17" fill="#28b1f3"/><rect x="432" y="688" width="17" height="17" fill="#27b0f3"/><rect x="448" y="688" width="17" height="17" fill="#26aff3"/><rect x="464" y="688" width="17" height="17" fill="#25adf3"/><rect x="480" y="688" width="17" height="17" fill="#24acf3"/><rect x="496" y="688" width="17" height="17" fill="#22aaf3"/><rect x="512" y="688" width="17" height="17" fill="#1fa7f4"/><rect x="528" y="688" width="17" height="17" fill="#1ca4f5"/><rect x="544" y="688" width="17" height="17" fill="#18a1f5"/><rect x="560" y="688" width="17" height="17" fill="#149ef6"/><rect x="576" y="688" width="17" height="17" fill="#119bf6"/><rect x="592" y="688" width="17" height="17" fill="#0e98f7"/><rect x="608" y="688" width="17" height="17" fill="#0c96f7"/><rect x="624" y="688" width="17" height="17" fill="#0b93f6"/><rect x="640" y="688" width="17" height="17" fill="#0a91f6"/><rect x="656" y="688" width="17" height="17" fill="#0a8ff5"/><rect x="672" y="688" width="17" height="17" fill="#0a8df4"/><rect x="688" y="688" width="17" height="17" fill="#0a8bf3"/><rect x="704" y="688" width="17" height="17" fill="#0a89f2"/><rect x="720" y="688" width="17" height="17" fill="#0a87f1"/><rect x="736" y="688" width="17" height="17" fill="#0a85f0"/><rect x="752" y="688" width="17" height="17" fill="#0a84ee"/><rect x="768" y="688" width="17" height="17" fill="#0981ed"/><rect x="784" y="688" width="17" height="17" fill="#087fec"/><rect x="800" y="688" width="17" height="17" fill="#077dea"/><rect x="816" y="688" width="17" height="17" fill="#067be9"/><rect x="832" y="688" width="17" height="17" fill="#0579e7"/><rect x="848" y="688" width="17" height="17" fill="#0477e5"/><rect x="864" y="688" width="17" height="17" fill="#0374e3"/><rect x="880" y="688" width="17" height="17" fill="#0272e1"/><rect x="896" y="688" width="17" height="17" fill="#0170df"/><rect x="912" y="688" width="17" height="17" fill="#016edc"/><rect x="928" y="688" width="17" height="17" fill="#016bda"/><rect x="944" y="688" width="17" height="17" fill="#0169d7"/><rect x="960" y="688" width="17" height="17" fill="#0167d3"/><rect x="976" y="688" width="17" height="17" fill="#0165d0"/><rect x="992" y="688" width="17" height="17" fill="#0163cd"/><rect x="1008" y="688" width="17" height="17" fill="#0261cb"/><rect x="1024" y="688" width="17" height="17" fill="#0260c9"/><rect x="1040" y="688" width="17" height="17" fill="#0260c9"/><rect x="1056" y="688" width="17" height="17" fill="#0260c9"/><rect x="-32" y="704" width="17" height="17" fill="#10b8f0"/><rect x="-16" y="704" width="17" height="17" fill="#10b8f0"/><rect x="0" y="704" width="17" height="17" fill="#15bbf0"/><rect x="16" y="704" width="17" height="17" fill="#1fc0f2"/><rect x="32" y="704" width="17" height="17" fill="#29c6f3"/><rect x="48" y="704" width="17" height="17" fill="#33ccf4"/><rect x="64" y="704" width="17" height="17" fill="#3cd1f5"/><rect x="80" y="704" width="17" height="17" fill="#47d5f6"/><rect x="96" y="704" width="17" height="17" fill="#56d9f5"/><rect x="112" y="704" width="17" height="17" fill="#63dcf4"/><rect x="128" y="704" width="17" height="17" fill="#6fddf2"/><rect x="144" y="704" width="17" height="17" fill="#75def2"/><rect x="160" y="704" width="17" height="17" fill="#75ddf2"/><rect x="176" y="704" width="17" height="17" fill="#6edaf3"/><rect x="192" y="704" width="17" height="17" fill="#65d7f4"/><rect x="208" y="704" width="17" height="17" fill="#59d3f5"/><rect x="224" y="704" width="17" height="17" fill="#4dcff7"/><rect x="240" y="704" width="17" height="17" fill="#43cbf8"/><rect x="256" y="704" width="17" height="17" fill="#3cc8f8"/><rect x="272" y="704" width="17" height="17" fill="#37c5f8"/><rect x="288" y="704" width="17" height="17" fill="#32c2f8"/><rect x="304" y="704" width="17" height="17" fill="#2fbff7"/><rect x="320" y="704" width="17" height="17" fill="#2cbcf7"/><rect x="336" y="704" width="17" height="17" fill="#2abaf6"/><rect x="352" y="704" width="17" height="17" fill="#28b7f5"/><rect x="368" y="704" width="17" height="17" fill="#26b5f5"/><rect x="384" y="704" width="17" height="17" fill="#24b3f4"/><rect x="400" y="704" width="17" height="17" fill="#23b1f3"/><rect x="416" y="704" width="17" height="17" fill="#23aff3"/><rect x="432" y="704" width="17" height="17" fill="#22aef3"/><rect x="448" y="704" width="17" height="17" fill="#22adf3"/><rect x="464" y="704" width="17" height="17" fill="#21acf3"/><rect x="480" y="704" width="17" height="17" fill="#20aaf3"/><rect x="496" y="704" width="17" height="17" fill="#1ea8f3"/><rect x="512" y="704" width="17" height="17" fill="#1ca6f4"/><rect x="528" y="704" width="17" height="17" fill="#18a3f5"/><rect x="544" y="704" width="17" height="17" fill="#15a0f5"/><rect x="560" y="704" width="17" height="17" fill="#119df6"/><rect x="576" y="704" width="17" height="17" fill="#0d9af7"/><rect x="592" y="704" width="17" height="17" fill="#0b97f7"/><rect x="608" y="704" width="17" height="17" fill="#0995f7"/><rect x="624" y="704" width="17" height="17" fill="#0892f7"/><rect x="640" y="704" width="17" height="17" fill="#0790f6"/><rect x="656" y="704" width="17" height="17" fill="#078ef6"/><rect x="672" y="704" width="17" height="17" fill="#088cf5"/><rect x="688" y="704" width="17" height="17" fill="#088bf4"/><rect x="704" y="704" width="17" height="17" fill="#0889f3"/><rect x="720" y="704" width="17" height="17" fill="#0987f1"/><rect x="736" y="704" width="17" height="17" fill="#0985f0"/><rect x="752" y="704" width="17" height="17" fill="#0983ef"/><rect x="768" y="704" width="17" height="17" fill="#0881ed"/><rect x="784" y="704" width="17" height="17" fill="#077fec"/><rect x="800" y="704" width="17" height="17" fill="#067deb"/><rect x="816" y="704" width="17" height="17" fill="#057be9"/><rect x="832" y="704" width="17" height="17" fill="#0479e8"/><rect x="848" y="704" width="17" height="17" fill="#0376e6"/><rect x="864" y="704" width="17" height="17" fill="#0274e4"/><rect x="880" y="704" width="17" height="17" fill="#0172e2"/><rect x="896" y="704" width="17" height="17" fill="#0070df"/><rect x="912" y="704" width="17" height="17" fill="#006ddd"/><rect x="928" y="704" width="17" height="17" fill="#006bda"/><rect x="944" y="704" width="17" height="17" fill="#0069d7"/><rect x="960" y="704" width="17" height="17" fill="#0167d4"/><rect x="976" y="704" width="17" height="17" fill="#0165d0"/><rect x="992" y="704" width="17" height="17" fill="#0163cd"/><rect x="1008" y="704" width="17" height="17" fill="#0261ca"/><rect x="1024" y="704" width="17" height="17" fill="#0260c9"/><rect x="1040" y="704" width="17" height="17" fill="#0260c9"/><rect x="1056" y="704" width="17" height="17" fill="#0260c9"/><rect x="-32" y="720" width="17" height="17" fill="#06b3ef"/><rect x="-16" y="720" width="17" height="17" fill="#06b3ef"/><rect x="0" y="720" width="17" height="17" fill="#0bb6ef"/><rect x="16" y="720" width="17" height="17" fill="#14bbf0"/><rect x="32" y="720" width="17" height="17" fill="#1dc1f2"/><rect x="48" y="720" width="17" height="17" fill="#25c6f3"/><rect x="64" y="720" width="17" height="17" fill="#2ecbf4"/><rect x="80" y="720" width="17" height="17" fill="#39d0f5"/><rect x="96" y="720" width="17" height="17" fill="#46d4f4"/><rect x="112" y="720" width="17" height="17" fill="#54d7f3"/><rect x="128" y="720" width="17" height="17" fill="#5fd9f2"/><rect x="144" y="720" width="17" height="17" fill="#67d9f2"/><rect x="160" y="720" width="17" height="17" fill="#67d8f2"/><rect x="176" y="720" width="17" height="17" fill="#61d6f3"/><rect x="192" y="720" width="17" height="17" fill="#58d3f4"/><rect x="208" y="720" width="17" height="17" fill="#4ecff5"/><rect x="224" y="720" width="17" height="17" fill="#43cbf7"/><rect x="240" y="720" width="17" height="17" fill="#39c8f8"/><rect x="256" y="720" width="17" height="17" fill="#33c5f8"/><rect x="272" y="720" width="17" height="17" fill="#2ec2f8"/><rect x="288" y="720" width="17" height="17" fill="#2abff8"/><rect x="304" y="720" width="17" height="17" fill="#27bcf7"/><rect x="320" y="720" width="17" height="17" fill="#25baf7"/><rect x="336" y="720" width="17" height="17" fill="#23b7f6"/><rect x="352" y="720" width="17" height="17" fill="#21b5f5"/><rect x="368" y="720" width="17" height="17" fill="#1fb2f5"/><rect x="384" y="720" width="17" height="17" fill="#1eb0f4"/><rect x="400" y="720" width="17" height="17" fill="#1eaff3"/><rect x="416" y="720" width="17" height="17" fill="#1dadf3"/><rect x="432" y="720" width="17" height="17" fill="#1dacf3"/><rect x="448" y="720" width="17" height="17" fill="#1dabf3"/><rect x="464" y="720" width="17" height="17" fill="#1caaf3"/><rect x="480" y="720" width="17" height="17" fill="#1ca9f3"/><rect x="496" y="720" width="17" height="17" fill="#1aa7f4"/><rect x="512" y="720" width="17" height="17" fill="#18a5f4"/><rect x="528" y="720" width="17" height="17" fill="#14a2f5"/><rect x="544" y="720" width="17" height="17" fill="#119ff6"/><rect x="560" y="720" width="17" height="17" fill="#0d9cf6"/><rect x="576" y="720" width="17" height="17" fill="#0a99f7"/><rect x="592" y="720" width="17" height="17" fill="#0796f8"/><rect x="608" y="720" width="17" height="17" fill="#0694f8"/><rect x="624" y="720" width="17" height="17" fill="#0591f7"/><rect x="640" y="720" width="17" height="17" fill="#058ff7"/><rect x="656" y="720" width="17" height="17" fill="#058ef6"/><rect x="672" y="720" width="17" height="17" fill="#058cf5"/><rect x="688" y="720" width="17" height="17" fill="#068af4"/><rect x="704" y="720" width="17" height="17" fill="#0688f3"/><rect x="720" y="720" width="17" height="17" fill="#0787f2"/><rect x="736" y="720" width="17" height="17" fill="#0785f0"/><rect x="752" y="720" width="17" height="17" fill="#0783ef"/><rect x="768" y="720" width="17" height="17" fill="#0781ee"/><rect x="784" y="720" width="17" height="17" fill="#067fec"/><rect x="800" y="720" width="17" height="17" fill="#057deb"/><rect x="816" y="720" width="17" height="17" fill="#047be9"/><rect x="832" y="720" width="17" height="17" fill="#0378e8"/><rect x="848" y="720" width="17" height="17" fill="#0276e6"/><rect x="864" y="720" width="17" height="17" fill="#0174e4"/><rect x="880" y="720" width="17" height="17" fill="#0072e2"/><rect x="896" y="720" width="17" height="17" fill="#0070e0"/><rect x="912" y="720" width="17" height="17" fill="#006ddd"/><rect x="928" y="720" width="17" height="17" fill="#006bda"/><rect x="944" y="720" width="17" height="17" fill="#0069d7"/><rect x="960" y="720" width="17" height="17" fill="#0067d4"/><rect x="976" y="720" width="17" height="17" fill="#0165d1"/><rect x="992" y="720" width="17" height="17" fill="#0163cd"/><rect x="1008" y="720" width="17" height="17" fill="#0161cb"/><rect x="1024" y="720" width="17" height="17" fill="#0160ca"/><rect x="1040" y="720" width="17" height="17" fill="#0160ca"/><rect x="1056" y="720" width="17" height="17" fill="#0160ca"/><rect x="-32" y="736" width="17" height="17" fill="#00b0ee"/><rect x="-16" y="736" width="17" height="17" fill="#00b0ee"/><rect x="0" y="736" width="17" height="17" fill="#04b3ef"/><rect x="16" y="736" width="17" height="17" fill="#0db8f0"/><rect x="32" y="736" width="17" height="17" fill="#15bdf1"/><rect x="48" y="736" width="17" height="17" fill="#1dc3f3"/><rect x="64" y="736" width="17" height="17" fill="#26c8f4"/><rect x="80" y="736" width="17" height="17" fill="#31ccf4"/><rect x="96" y="736" width="17" height="17" fill="#3dd0f4"/><rect x="112" y="736" width="17" height="17" fill="#4ad3f3"/><rect x="128" y="736" width="17" height="17" fill="#54d5f2"/><rect x="144" y="736" width="17" height="17" fill="#5bd6f2"/><rect x="160" y="736" width="17" height="17" fill="#5cd5f2"/><rect x="176" y="736" width="17" height="17" fill="#58d3f3"/><rect x="192" y="736" width="17" height="17" fill="#50d0f4"/><rect x="208" y="736" width="17" height="17" fill="#46cdf5"/><rect x="224" y="736" width="17" height="17" fill="#3cc9f6"/><rect x="240" y="736" width="17" height="17" fill="#33c6f7"/><rect x="256" y="736" width="17" height="17" fill="#2dc3f8"/><rect x="272" y="736" width="17" height="17" fill="#28c0f8"/><rect x="288" y="736" width="17" height="17" fill="#25bdf7"/><rect x="304" y="736" width="17" height="17" fill="#22bbf7"/><rect x="320" y="736" width="17" height="17" fill="#20b8f6"/><rect x="336" y="736" width="17" height="17" fill="#1eb6f6"/><rect x="352" y="736" width="17" height="17" fill="#1cb3f5"/><rect x="368" y="736" width="17" height="17" fill="#1bb1f5"/><rect x="384" y="736" width="17" height="17" fill="#1aaff4"/><rect x="400" y="736" width="17" height="17" fill="#1aadf4"/><rect x="416" y="736" width="17" height="17" fill="#1aacf3"/><rect x="432" y="736" width="17" height="17" fill="#19abf3"/><rect x="448" y="736" width="17" height="17" fill="#19aaf3"/><rect x="464" y="736" width="17" height="17" fill="#19a9f3"/><rect x="480" y="736" width="17" height="17" fill="#18a8f3"/><rect x="496" y="736" width="17" height="17" fill="#17a6f4"/><rect x="512" y="736" width="17" height="17" fill="#15a4f4"/><rect x="528" y="736" width="17" height="17" fill="#12a1f5"/><rect x="544" y="736" width="17" height="17" fill="#0e9ef6"/><rect x="560" y="736" width="17" height="17" fill="#0b9bf7"/><rect x="576" y="736" width="17" height="17" fill="#0898f7"/><rect x="592" y="736" width="17" height="17" fill="#0595f8"/><rect x="608" y="736" width="17" height="17" fill="#0493f8"/><rect x="624" y="736" width="17" height="17" fill="#0391f7"/><rect x="640" y="736" width="17" height="17" fill="#038ff7"/><rect x="656" y="736" width="17" height="17" fill="#038df6"/><rect x="672" y="736" width="17" height="17" fill="#048bf5"/><rect x="688" y="736" width="17" height="17" fill="#048af4"/><rect x="704" y="736" width="17" height="17" fill="#0588f3"/><rect x="720" y="736" width="17" height="17" fill="#0686f2"/><rect x="736" y="736" width="17" height="17" fill="#0684f1"/><rect x="752" y="736" width="17" height="17" fill="#0683ef"/><rect x="768" y="736" width="17" height="17" fill="#0581ee"/><rect x="784" y="736" width="17" height="17" fill="#057fed"/><rect x="800" y="736" width="17" height="17" fill="#047ceb"/><rect x="816" y="736" width="17" height="17" fill="#037aea"/><rect x="832" y="736" width="17" height="17" fill="#0278e8"/><rect x="848" y="736" width="17" height="17" fill="#0176e6"/><rect x="864" y="736" width="17" height="17" fill="#0074e4"/><rect x="880" y="736" width="17" height="17" fill="#0072e2"/><rect x="896" y="736" width="17" height="17" fill="#006fe0"/><rect x="912" y="736" width="17" height="17" fill="#006ddd"/><rect x="928" y="736" width="17" height="17" fill="#006bda"/><rect x="944" y="736" width="17" height="17" fill="#0069d7"/><rect x="960" y="736" width="17" height="17" fill="#0067d4"/><rect x="976" y="736" width="17" height="17" fill="#0065d1"/><rect x="992" y="736" width="17" height="17" fill="#0163ce"/><rect x="1008" y="736" width="17" height="17" fill="#0161cb"/><rect x="1024" y="736" width="17" height="17" fill="#0160ca"/><rect x="1040" y="736" width="17" height="17" fill="#0160ca"/><rect x="1056" y="736" width="17" height="17" fill="#0160ca"/><rect x="-32" y="752" width="17" height="17" fill="#00b0ee"/><rect x="-16" y="752" width="17" height="17" fill="#00b0ee"/><rect x="0" y="752" width="17" height="17" fill="#04b3ef"/><rect x="16" y="752" width="17" height="17" fill="#0db8f0"/><rect x="32" y="752" width="17" height="17" fill="#15bdf1"/><rect x="48" y="752" width="17" height="17" fill="#1dc3f3"/><rect x="64" y="752" width="17" height="17" fill="#26c8f4"/><rect x="80" y="752" width="17" height="17" fill="#31ccf4"/><rect x="96" y="752" width="17" height="17" fill="#3dd0f4"/><rect x="112" y="752" width="17" height="17" fill="#4ad3f3"/><rect x="128" y="752" width="17" height="17" fill="#54d5f2"/><rect x="144" y="752" width="17" height="17" fill="#5bd6f2"/><rect x="160" y="752" width="17" height="17" fill="#5cd5f2"/><rect x="176" y="752" width="17" height="17" fill="#58d3f3"/><rect x="192" y="752" width="17" height="17" fill="#50d0f4"/><rect x="208" y="752" width="17" height="17" fill="#46cdf5"/><rect x="224" y="752" width="17" height="17" fill="#3cc9f6"/><rect x="240" y="752" width="17" height="17" fill="#33c6f7"/><rect x="256" y="752" width="17" height="17" fill="#2dc3f8"/><rect x="272" y="752" width="17" height="17" fill="#28c0f8"/><rect x="288" y="752" width="17" height="17" fill="#25bdf7"/><rect x="304" y="752" width="17" height="17" fill="#22bbf7"/><rect x="320" y="752" width="17" height="17" fill="#20b8f6"/><rect x="336" y="752" width="17" height="17" fill="#1eb6f6"/><rect x="352" y="752" width="17" height="17" fill="#1cb3f5"/><rect x="368" y="752" width="17" height="17" fill="#1bb1f5"/><rect x="384" y="752" width="17" height="17" fill="#1aaff4"/><rect x="400" y="752" width="17" height="17" fill="#1aadf4"/><rect x="416" y="752" width="17" height="17" fill="#1aacf3"/><rect x="432" y="752" width="17" height="17" fill="#19abf3"/><rect x="448" y="752" width="17" height="17" fill="#19aaf3"/><rect x="464" y="752" width="17" height="17" fill="#19a9f3"/><rect x="480" y="752" width="17" height="17" fill="#18a8f3"/><rect x="496" y="752" width="17" height="17" fill="#17a6f4"/><rect x="512" y="752" width="17" height="17" fill="#15a4f4"/><rect x="528" y="752" width="17" height="17" fill="#12a1f5"/><rect x="544" y="752" width="17" height="17" fill="#0e9ef6"/><rect x="560" y="752" width="17" height="17" fill="#0b9bf7"/><rect x="576" y="752" width="17" height="17" fill="#0898f7"/><rect x="592" y="752" width="17" height="17" fill="#0595f8"/><rect x="608" y="752" width="17" height="17" fill="#0493f8"/><rect x="624" y="752" width="17" height="17" fill="#0391f7"/><rect x="640" y="752" width="17" height="17" fill="#038ff7"/><rect x="656" y="752" width="17" height="17" fill="#038df6"/><rect x="672" y="752" width="17" height="17" fill="#048bf5"/><rect x="688" y="752" width="17" height="17" fill="#048af4"/><rect x="704" y="752" width="17" height="17" fill="#0588f3"/><rect x="720" y="752" width="17" height="17" fill="#0686f2"/><rect x="736" y="752" width="17" height="17" fill="#0684f1"/><rect x="752" y="752" width="17" height="17" fill="#0683ef"/><rect x="768" y="752" width="17" height="17" fill="#0581ee"/><rect x="784" y="752" width="17" height="17" fill="#057fed"/><rect x="800" y="752" width="17" height="17" fill="#047ceb"/><rect x="816" y="752" width="17" height="17" fill="#037aea"/><rect x="832" y="752" width="17" height="17" fill="#0278e8"/><rect x="848" y="752" width="17" height="17" fill="#0176e6"/><rect x="864" y="752" width="17" height="17" fill="#0074e4"/><rect x="880" y="752" width="17" height="17" fill="#0072e2"/><rect x="896" y="752" width="17" height="17" fill="#006fe0"/><rect x="912" y="752" width="17" height="17" fill="#006ddd"/><rect x="928" y="752" width="17" height="17" fill="#006bda"/><rect x="944" y="752" width="17" height="17" fill="#0069d7"/><rect x="960" y="752" width="17" height="17" fill="#0067d4"/><rect x="976" y="752" width="17" height="17" fill="#0065d1"/><rect x="992" y="752" width="17" height="17" fill="#0163ce"/><rect x="1008" y="752" width="17" height="17" fill="#0161cb"/><rect x="1024" y="752" width="17" height="17" fill="#0160ca"/><rect x="1040" y="752" width="17" height="17" fill="#0160ca"/><rect x="1056" y="752" width="17" height="17" fill="#0160ca"/></g></svg>
<svg class="a" style="left:0;top:0" width="1024" height="779">
<path d="M0 690 Q 90 620 170 555" stroke="#fff" stroke-opacity="0.5" stroke-width="1.5" fill="none"/>
<path d="M0 702 Q 100 640 170 585" stroke="#fff" stroke-opacity="0.3" stroke-width="1" fill="none"/>
<path d="M0 732 Q 60 650 170 610" stroke="#6bd24a" stroke-width="1.6" fill="none"/>
<path d="M734 709 Q 770 718 796 739 L 788 739 Q 762 720 730 709 Z" fill="#fff" fill-opacity="0.95"/>
<path d="M350 739 Q 400 725 470 708" stroke="#fff" stroke-opacity="0.35" stroke-width="1.5" fill="none"/>
</svg>

<!-- Desktop icons -->
<!-- Administrator -->
<svg class="a" style="left:14px;top:2px" width="46" height="52" viewBox="14 2 46 52">
<defs><linearGradient id="fdb" x1="0" x2="1"><stop offset="0" stop-color="#e8cc78"/><stop offset="1" stop-color="#f6e0a0"/></linearGradient>
<linearGradient id="fdf" x1="0" x2="1"><stop offset="0" stop-color="#fff4c8"/><stop offset="1" stop-color="#e8c870"/></linearGradient></defs>
<path d="M19.5 6.5 L47 9.5 L47 45 L29 51 Z" fill="url(#fdb)" stroke="#c8a850" stroke-width=".7"/>
<path d="M19.2 6 L29 12.5 L29 51 L19.2 44.5 Z" fill="url(#fdf)" stroke="#caa850" stroke-width=".7"/>
<path d="M35 53 Q35 41 43.5 40 Q53 41 53.5 53 Z" fill="#62a878" stroke="#3a7a50" stroke-width=".7"/>
<path d="M41 41 l2.5 6 2.5-6z" fill="#e8f0e8"/>
<ellipse cx="43.3" cy="32.5" rx="5.4" ry="6.2" fill="#d8aa88" stroke="#8a6a50" stroke-width=".6"/>
<path d="M37.5 31 Q37 25 43 24.5 Q49.5 24.5 49 31 Q47 27 43 27.5 Q39 27.5 37.5 31Z" fill="#3a302a"/>
</svg>
<div class="dl" style="left:0px;top:57px;width:80px">Administrator</div>
<!-- Chrome -->
<svg class="a" style="left:94px;top:4px" width="52" height="52" viewBox="94 4 52 52">
<circle cx="119.7" cy="29.3" r="22" fill="#2fa84f"/>
<path d="M119.7 29.3 L100.6 18.3 A22 22 0 0 1 138.8 18.3 Z" fill="#e0433a"/>
<path d="M119.7 29.3 L138.8 18.3 A22 22 0 0 1 119.7 51.3 Z" fill="#f8c533"/>
<circle cx="119.7" cy="29.3" r="10" fill="#fff"/>
<circle cx="119.7" cy="29.3" r="7.8" fill="#4b8bf0"/>
<rect x="96.5" y="37.5" width="14.5" height="14.5" fill="#f4f6f8" stroke="#a8b4c0" stroke-width=".8"/>
<path d="M99 49.5 q0-6.5 6.5-6.5 v-3 l3.5 4.5 -3.5 4.5 v-3 q-4 0-6.5 3.5z" fill="#1a4a9a"/>
</svg>
<div class="dl" style="left:80px;top:57px;width:80px">Google<br>Chrome</div>
<!-- Computer -->
<svg class="a" style="left:14px;top:110px" width="52" height="46" viewBox="14 110 52 46">
<defs><linearGradient id="scr" x1="0" x2="1" y1="0" y2="0.3"><stop offset="0" stop-color="#1010a0"/><stop offset="0.5" stop-color="#2a2ad0"/><stop offset="0.52" stop-color="#c8d4f8"/><stop offset="1" stop-color="#4a5ae8"/></linearGradient></defs>
<path d="M18 122 L28 120 L28 147 L18 146Z" fill="#e8e6e0" stroke="#b0aea8" stroke-width=".6"/>
<rect x="18.5" y="125" width="1.5" height="3" fill="#8ad040"/>
<path d="M28 115 L61 118 L61 143 L28 141Z" fill="#f0f0f4" stroke="#a8acb8" stroke-width=".8"/>
<path d="M30 117 L58.5 119.5 L58.5 140.5 L30 139Z" fill="url(#scr)"/>
<ellipse cx="44.5" cy="149" rx="11" ry="4.5" fill="#e8e6e2" stroke="#b8b4ac" stroke-width=".8"/>
<path d="M41 143h7v4h-7z" fill="#dcdad6"/>
</svg>
<div class="dl" style="left:0px;top:162px;width:80px">Computer</div>
<!-- winbox -->
<svg class="a" style="left:96px;top:110px" width="48" height="48" viewBox="96 110 48 48">
<defs><radialGradient id="wb" cx="0.6" cy="0.35" r="0.75"><stop offset="0" stop-color="#8cc4fa"/><stop offset="0.6" stop-color="#4a8ee0"/><stop offset="1" stop-color="#2a62b8"/></radialGradient></defs>
<circle cx="120.2" cy="133.6" r="21.5" fill="url(#wb)" stroke="#0c3a80" stroke-width="1.2"/>
<path d="M107 121 Q 108 145 134 147.5 Q 113 141 108.5 121Z" fill="#fff" stroke="#fff" stroke-width="1.4" stroke-linejoin="round"/>
<path d="M114 120 Q 115 138 136 139.8 Q 120 135 115.5 120Z" fill="#fff" stroke="#fff" stroke-width="1.2" stroke-linejoin="round"/>
</svg>
<div class="dl" style="left:80px;top:162px;width:80px">winbox64</div>
<!-- Recycle bin -->
<svg class="a" style="left:18px;top:214px" width="44" height="50" viewBox="18 214 44 50">
<defs><linearGradient id="rbg" x1="0" x2="1"><stop offset="0" stop-color="#fff" stop-opacity=".35"/><stop offset=".2" stop-color="#fff" stop-opacity=".12"/><stop offset=".8" stop-color="#fff" stop-opacity=".1"/><stop offset="1" stop-color="#fff" stop-opacity=".3"/></linearGradient></defs>
<path d="M22.5 221 L29 259 Q40 262 52 259 L57 221 Z" fill="url(#rbg)" stroke="#cfe6f8" stroke-opacity=".6" stroke-width=".8"/>
<path d="M28 249 Q40 246 52.5 249 L52 259 Q40 262 29 259Z" fill="#ece6de"/>
<path d="M29 257 Q40 260 52 257 L52 259 Q40 262 29 259Z" fill="#9a8a70"/>
<path d="M36 242 q2-4 4 0 v6 h-4z" fill="#2a5ab8" opacity=".8"/>
<ellipse cx="39.8" cy="220.6" rx="17.6" ry="3.2" fill="none" stroke="#e8eef4" stroke-width="1.6"/>
<ellipse cx="39.8" cy="221.2" rx="17" ry="2.6" fill="none" stroke="#6a7a88" stroke-width=".6"/>
</svg>
<div class="dl" style="left:0px;top:267px;width:80px">Recycle Bin</div>
<!-- Control panel -->
<svg class="a" style="left:14px;top:324px" width="52" height="46" viewBox="14 324 52 46">
<defs><linearGradient id="cpg" x1="0" x2="1" y1="0" y2="1"><stop offset="0" stop-color="#8ccaf0"/><stop offset="1" stop-color="#4aa0dc"/></linearGradient></defs>
<rect x="17" y="328" width="44.5" height="30.5" fill="url(#cpg)" stroke="#d8f0ff" stroke-width="1"/>
<circle cx="28.4" cy="338.7" r="6.6" fill="#6ab0e8" stroke="#fff" stroke-width="1.3"/>
<path d="M28.4 332.1 a6.6 6.6 0 0 1 6.6 6.6 h-6.6z" fill="#f6a830"/>
<circle cx="25" cy="350" r="1.2" fill="#bfe"/><circle cx="28.5" cy="350" r="1.2" fill="#8e8"/><circle cx="32" cy="350" r="1.2" fill="#fc6"/>
<rect x="41" y="334.5" width="17" height="3.2" rx="1.6" fill="#2a78b8" stroke="#e0f6ff" stroke-width=".9"/>
<rect x="41" y="340.5" width="17" height="3.2" rx="1.6" fill="#2a78b8" stroke="#e0f6ff" stroke-width=".9"/>
<rect x="41" y="346.5" width="17" height="3.2" rx="1.6" fill="#2a78b8" stroke="#e0f6ff" stroke-width=".9"/>
<path d="M29 366 Q31 357 39.5 356.5 Q48 357 50 366 Z" fill="#ecece8" stroke="#c8c4bc" stroke-width=".6"/>
</svg>
<div class="dl" style="left:0px;top:372px;width:80px">Control Panel</div>
<!-- FileZilla -->
<svg class="a" style="left:14px;top:423px" width="52" height="52" viewBox="14 423 52 52">
<rect x="16.5" y="425.5" width="47" height="46.5" fill="#c80a0a" stroke="#a00000" stroke-width="1.5" stroke-dasharray="1.5 1.5"/>
<rect x="18" y="427" width="44" height="43.5" fill="#d40c0c"/>
<path d="M29 432 H50 L49 438 H35.5 L34.5 443.5 H47 L46 449 H33.5 L31 462 H24.5Z" fill="#fff"/>
<path d="M38 449.5 H57 L56 455 L44 466 H56 L55 471 H34 L35 466 L47 455 H37.2Z" fill="#fff"/>
<rect x="17" y="458" width="14" height="14" fill="#f4f6f8" stroke="#a8b4c0" stroke-width=".8"/><path d="M19.5 470 q0-6.5 6.5-6.5 v-3 l3.5 4.5 -3.5 4.5 v-3 q-4 0-6.5 3.5z" fill="#1a4a9a"/>
</svg>
<div class="dl" style="left:0px;top:477px;width:80px">FileZilla Client</div>
<!-- PuTTY -->
<svg class="a" style="left:14px;top:526px" width="52" height="54" viewBox="14 526 52 54">
<path d="M38.5 530.5 h21 v14.5 h-21z" fill="#d0d0d0" stroke="#202020" stroke-width="1"/>
<rect x="41" y="533" width="15.5" height="11" fill="#0000c8"/>
<path d="M36 545 h25 l2.5 3 v4.5 h-28z" fill="#e0e0e0" stroke="#202020" stroke-width="1"/>
<path d="M38 549.5 h22" stroke="#404040" stroke-width="1"/>
<path d="M21 554.5 h21 v14 h-21z" fill="#d0d0d0" stroke="#202020" stroke-width="1"/>
<rect x="23.5" y="557" width="15.5" height="10.5" fill="#0000c8"/>
<path d="M19 568.5 h25 l2.5 3 v4.5 h-28z" fill="#e0e0e0" stroke="#202020" stroke-width="1"/>
<path d="M21 573 h22" stroke="#404040" stroke-width="1"/>
<path d="M51 538 L37 549 L41 550 L29 563 L45 551 L41 550 Z" fill="#f8f020" stroke="#303000" stroke-width=".7"/>
<rect x="17" y="563" width="14" height="14" fill="#f4f6f8" stroke="#a8b4c0" stroke-width=".8"/><path d="M19.5 575 q0-6.5 6.5-6.5 v-3 l3.5 4.5 -3.5 4.5 v-3 q-4 0-6.5 3.5z" fill="#1a4a9a"/>
</svg>
<div class="dl" style="left:0px;top:582px;width:80px">PuTTY<br>(64-bit)</div>
<!-- WinSCP -->
<svg class="a" style="left:14px;top:633px" width="52" height="52" viewBox="14 633 52 52">
<defs><linearGradient id="lk" x1="0" x2="0" y1="0" y2="1"><stop offset="0" stop-color="#e8e8ea"/><stop offset=".5" stop-color="#c8c8cc"/><stop offset="1" stop-color="#9a9aa0"/></linearGradient></defs>
<path d="M17.5 636.5 h16 l-4.5 4.5 8 8 -4 4 -8-8 -4.5 4.5z" fill="#9ad8f8" stroke="#1a70b0" stroke-width="1"/>
<path d="M32 655 v-6 a8 8 0 0 1 16 0 v6" stroke="#606068" stroke-width="4.2" fill="none"/>
<path d="M32 655 v-6 a8 8 0 0 1 16 0 v6" stroke="#e4e4e8" stroke-width="2.4" fill="none"/>
<rect x="27.5" y="654.5" width="25" height="18.5" rx="2" fill="url(#lk)" stroke="#505058" stroke-width="1"/>
<path d="M63 681 h-19 l5-5 -7.5-7.5 5.5-5.5 7.5 7.5 5-5z" fill="#62d020" stroke="#2a8a10" stroke-width="1"/>
<rect x="17" y="668" width="14" height="14" fill="#f4f6f8" stroke="#a8b4c0" stroke-width=".8"/><path d="M19.5 680 q0-6.5 6.5-6.5 v-3 l3.5 4.5 -3.5 4.5 v-3 q-4 0-6.5 3.5z" fill="#1a4a9a"/>
</svg>
<div class="dl" style="left:0px;top:686px;width:80px">WinSCP</div>
<!-- WINDOW -->
<div id="win"></div>
<!-- title icon -->
<svg class="a" style="left:176px;top:59px" width="19" height="18" viewBox="0 0 19 18">
<path d="M0.5 0.5h7l-2.2 2.2 3.2 3.2-2.4 2.4-3.2-3.2-2.4 2.4z" fill="#3cb4f0" stroke="#1a78c0" stroke-width=".7"/>
<rect x="5.5" y="7.5" width="9" height="7" rx="1" fill="#f4eeee" stroke="#3a3a44" stroke-width="1.2"/>
<path d="M18.5 17.5h-7.5l2.4-2.4-3.2-3.2 2.4-2.4 3.2 3.2 2.7-2.7z" fill="#5cd02a" stroke="#2a8a18" stroke-width=".7"/>
</svg>
<div class="t" style="left:198px;top:62px;font-size:12px;color:#1b2433">pub – anonymous@172.16.100.1 – WinSCP</div>
<!-- caption buttons -->
<div class="a" style="left:879px;top:60px;width:31px;height:17px;border:1px solid #6b7d94;border-radius:3px;background:linear-gradient(#dfe8f3,#c4d3e5 45%,#b1c4dc 50%,#c5d6ea)"></div>
<div class="a" style="left:888px;top:67px;width:13px;height:5px;border:1px solid #2a3442;background:#fff;border-radius:1px"></div>
<div class="a" style="left:912px;top:60px;width:31px;height:17px;border:1px solid #6b7d94;border-radius:3px;background:linear-gradient(#dfe8f3,#c4d3e5 45%,#b1c4dc 50%,#c5d6ea)"></div>
<div class="a" style="left:922px;top:64px;width:11px;height:9px;border:1px solid #2a3442;background:#fff;border-radius:1px"></div>
<div class="a" style="left:925px;top:67px;width:5px;height:3px;background:#4a5a6c"></div>
<div class="a" style="left:945px;top:60px;width:31px;height:17px;border:1px solid #5a1e18;border-radius:3px;background:linear-gradient(#f2b49c,#e48a6c 45%,#cc4a2c 50%,#d86a4c 85%,#eca088)"></div>
<svg class="a" style="left:954px;top:63px" width="13" height="11" viewBox="0 0 13 11"><path d="M2 1.5l9 8M11 1.5l-9 8" stroke="#5a1a10" stroke-width="3.6"/><path d="M2 1.5l9 8M11 1.5l-9 8" stroke="#fff" stroke-width="2.2"/></svg>

<div id="client"></div>
<!-- MENU BAR -->
<div class="a" style="left:176px;top:80px;width:802px;height:75px;background:linear-gradient(#e4f0fc 0,#eaf2fa 3px,#f0f1f2 7px,#f0f0f0 12px)"></div>
<div class="grip" style="left:180px;top:86px;height:13px"></div>
<div class="t" style="left:188px;top:86px">Local</div>
<div class="t" style="left:225px;top:86px">Mark</div>
<div class="t" style="left:261px;top:86px">Files</div>
<div class="t" style="left:293px;top:86px">Commands</div>
<div class="t" style="left:364px;top:86px">Tabs</div>
<div class="t" style="left:398px;top:86px">Options</div>
<div class="t" style="left:449px;top:86px">Remote</div>
<div class="t" style="left:499px;top:86px">Help</div>

<!-- MAIN TOOLBAR -->
<div class="grip" style="left:180px;top:111px;height:15px"></div>
<svg class="a" style="left:187px;top:110px" width="16" height="16" viewBox="0 0 16 16">
<rect x="0.5" y="1.5" width="15" height="13" fill="#fff" stroke="#707a84"/><rect x="1" y="2" width="14" height="2" fill="#3aa0c8"/>
<path d="M8 2v12" stroke="#707a84"/><path d="M2 8.5h12M2 8.5l3-2.5v5zM14 8.5l-3-2.5v5z" stroke="#333" fill="#333"/>
</svg>
<svg class="a" style="left:210px;top:110px" width="16" height="16" viewBox="0 0 16 16">
<rect x="0" y="1" width="16" height="14" fill="#f6c23e"/><rect x="0" y="1" width="6" height="3" fill="#f2a81a"/>
<path d="M4 5q4-4 9 0" stroke="#3aa82a" stroke-width="2.2" fill="none"/><path d="M12 2l3 4h-5z" fill="#3aa82a"/>
<path d="M12 11q-4 4-9 0" stroke="#e04a1a" stroke-width="2.2" fill="none"/><path d="M4 14l-3-4h5z" fill="#e04a1a"/>
</svg>
<svg class="a" style="left:233px;top:110px" width="16" height="16" viewBox="0 0 16 16">
<rect x="0" y="2" width="14" height="13" fill="#f6cf55"/><rect x="0" y="1" width="6" height="3" fill="#f2b02a"/>
<path d="M5 6q4-4 9 0" stroke="#3aa82a" stroke-width="2.4" fill="none"/><path d="M13 3l3 4h-5z" fill="#3aa82a"/>
<path d="M13 10q-4 4-9 0" stroke="#3aa82a" stroke-width="2.4" fill="none"/><path d="M5 13l-3-4h5z" fill="#3aa82a"/>
</svg>
<div class="t" style="left:254px;top:111px;letter-spacing:-0.2px">Synchronize</div>
<div class="sep" style="left:326px;top:107px"></div>
<svg class="a" style="left:332px;top:110px" width="16" height="16" viewBox="0 0 16 16">
<rect x="0" y="1" width="16" height="14" fill="#1e2a34"/><rect x="0" y="1" width="16" height="2" fill="#4a5a68"/>
<path d="M3.5 6l3.5 3-3.5 3" stroke="#fff" fill="none" stroke-width="1.3"/>
</svg>
<svg class="a" style="left:354px;top:109px" width="18" height="18" viewBox="0 0 18 18">
<rect x="5" y="1" width="12" height="9" fill="#3a8ad8" stroke="#2a5a90"/><rect x="1" y="6" width="12" height="9" fill="#5aaae8" stroke="#2a5a90"/>
<path d="M5 15v2h5" stroke="#555"/><path d="M13 2l-6 7h3l-4 6 7-8h-3z" fill="#f6e43a" stroke="#a09010" stroke-width=".5"/>
</svg>
<div class="sep" style="left:377px;top:107px"></div>
<svg class="a" style="left:383px;top:110px" width="16" height="16" viewBox="0 0 16 16">
<rect x="0.5" y="0.5" width="15" height="15" fill="#e8f4ea" stroke="#6a8a7a"/><rect x="1" y="1" width="14" height="2" fill="#3aa0c8"/>
<path d="M4 8q0-4 5-4" stroke="#3aa82a" stroke-width="1.8" fill="none"/><path d="M9 2l3 2-3 2z" fill="#3aa82a"/>
<path d="M12 9q0 4-5 4" stroke="#3aa82a" stroke-width="1.8" fill="none"/><path d="M7 11l-3 2 3 2z" fill="#3aa82a"/>
</svg>
<div class="grip" style="left:408px;top:111px;height:15px"></div>
<svg class="a" style="left:416px;top:109px" width="18" height="18" viewBox="0 0 18 18">
<circle cx="9" cy="9" r="7" fill="none" stroke="#f2b01e" stroke-width="3" stroke-dasharray="2.75 2.75"/>
<circle cx="9" cy="9" r="4.6" fill="none" stroke="#f6c232" stroke-width="4.2"/>
<circle cx="9" cy="9" r="2.3" fill="#fff8e0"/>
</svg>
<div class="sep" style="left:440px;top:107px"></div>
<svg class="a" style="left:446px;top:109px" width="18" height="18" viewBox="0 0 18 18">
<path d="M7.5 1.5h6l3 3v8h-9z" fill="#fff" stroke="#8a9098"/>
<path d="M4.5 4.5h6l3 3v8h-9z" fill="#fff" stroke="#8a9098"/>
<path d="M1.5 7.5h6l3 3v7h-9z" fill="#fff" stroke="#8a9098"/>
<path d="M3 11.5h5M3 13.5h5M3 15.5h5" stroke="#8a9098" stroke-width=".8"/>
</svg>
<div class="t" style="left:468px;top:111px">Queue</div>
<div class="dd" style="left:510px;top:117px"></div>
<div class="grip" style="left:521px;top:111px;height:15px"></div>
<div class="t" style="left:533px;top:112px;letter-spacing:-0.15px">Transfer Settings</div>
<div class="a" style="left:625px;top:109px;width:148px;height:19px;background:#fff"></div>
<div class="t" style="left:627px;top:112px">Default</div>
<div class="dd" style="left:763px;top:117px"></div>
<div class="grip" style="left:781px;top:111px;height:15px"></div>
<svg class="a" style="left:787px;top:110px" width="16" height="16" viewBox="0 0 16 16">
<circle cx="8" cy="8" r="5" fill="#3aa0a0"/><path d="M5 5q2 3 6 1M4 9q4-1 7 3" stroke="#7acb5a" stroke-width="1.5" fill="none"/>
<path d="M2 7q1-6 9-5" stroke="#e0401a" stroke-width="2.2" fill="none"/><path d="M10 -0.5l4 3-4 2.5z" fill="#e0401a"/>
<path d="M14 9q-1 6-9 5" stroke="#e0401a" stroke-width="2.2" fill="none"/><path d="M6 16.5l-4-3 4-2.5z" fill="#e0401a"/>
</svg>
<div class="dd" style="left:809px;top:117px"></div>

<!-- TAB STRIP -->
<div class="a" style="left:176px;top:154px;width:802px;height:1px;background:#9aa0a8"></div>
<div class="a" style="left:177px;top:134px;width:186px;height:20px;border:1px solid #8e949c;border-bottom:none;background:linear-gradient(#f2f2f2,#dadbdc)"></div>
<svg class="a" style="left:185px;top:138px" width="15" height="13" viewBox="0 0 15 13"><rect x="0.5" y="0.5" width="14" height="12" fill="#6cd4ec" stroke="#2aa0c8"/><path d="M1 3.5h13" stroke="#2aa0c8"/></svg>
<div class="t" style="left:206px;top:138px;letter-spacing:-0.05px">Documents – Documents</div>
<svg class="a" style="left:346px;top:139px" width="11" height="11" viewBox="0 0 11 11"><path d="M1 1l9 9M10 1l-9 9" stroke="#222" stroke-width="1.2"/></svg>
<div class="a" style="left:362px;top:133px;width:193px;height:22px;border:1px solid #8e949c;border-bottom:none;background:#fff"></div>
<svg class="a" style="left:370px;top:135px" width="16" height="16" viewBox="0 0 16 16"><rect x="1" y="1" width="13" height="10" fill="#3ab0e0" stroke="#2a7ab0"/><rect x="2" y="2" width="11" height="4" fill="#7fd4f4"/><path d="M7.5 11v3M4 14.5h7" stroke="#555"/></svg>
<div class="t" style="left:392px;top:136px;letter-spacing:-0.3px">anonymous@172.16.100.1</div>
<svg class="a" style="left:537px;top:138px" width="11" height="11" viewBox="0 0 11 11"><path d="M1 1l9 9M10 1l-9 9" stroke="#222" stroke-width="1.2"/></svg>
<div class="a" style="left:554px;top:134px;width:97px;height:20px;border:1px solid #8e949c;border-bottom:none;border-left:none;background:linear-gradient(#f2f2f2,#dadbdc)"></div>
<svg class="a" style="left:560px;top:135px" width="17" height="17" viewBox="0 0 17 17"><rect x="1" y="3" width="12" height="9" fill="#3a9ad8" stroke="#2a6aa0"/><path d="M7 12v2M4 14.5h6" stroke="#555"/><path d="M13 1l1 2.5 2.5.5-2 1.5.5 2.5-2-1.5-2 1.5.5-2.5-2-1.5 2.5-.5z" fill="#fff" stroke="#7a8a9a" stroke-width=".6"/></svg>
<div class="t" style="left:581px;top:138px">New Tab</div>
<div class="dd" style="left:637px;top:144px"></div>
<!-- LEFT PANEL TOOLBARS -->
<div class="a" style="left:176px;top:155px;width:802px;height:53px;background:#f0f0f0"></div>
<div class="grip" style="left:180px;top:161px;height:15px"></div>
<div class="a" style="left:187px;top:159px;width:91px;height:20px;background:#fff"></div>
<svg class="a" style="left:188px;top:160px" width="16" height="17" viewBox="0 0 16 17"><path d="M1 2l6 2v13l-6-2z" fill="#e8c45a" stroke="#b8942a" stroke-width=".6"/><rect x="6" y="3" width="9" height="13" fill="#fff" stroke="#8a9098"/><path d="M8 6h5M8 8h5M8 10h5M8 12h5" stroke="#5a8ac8" stroke-width=".8"/></svg>
<div class="t" style="left:205px;top:162px;letter-spacing:-0.1px">My documer</div>
<div class="dd" style="left:281px;top:168px"></div>
<svg class="a" style="left:293px;top:160px" width="17" height="16" viewBox="0 0 17 16"><path d="M0 4h6l1 1h9v10H0z" fill="#f2c23a"/><path d="M0 7h16l-1 8H0z" fill="#f8d860"/><path d="M5 5q4-5 9-2" stroke="#3a8ad8" stroke-width="2" fill="none"/><path d="M14 0l2 4-4 0z" fill="#3a8ad8"/></svg>
<div class="dd" style="left:316px;top:168px"></div>
<svg class="a" style="left:329px;top:160px" width="16" height="16" viewBox="0 0 16 16"><rect x="0.5" y="0.5" width="15" height="15" fill="#fff" stroke="#6a7480"/><path d="M3 3h10l-4 5v5l-2-1v-4z" fill="#8a9098"/></svg>
<div class="dd" style="left:351px;top:168px"></div>
<div class="grip" style="left:367px;top:161px;height:15px"></div>
<svg class="a" style="left:376px;top:162px" width="16" height="12" viewBox="0 0 16 12"><path d="M1 6h14M1 6l5-4v8z" stroke="#cfd3d8" stroke-width="2.5" fill="#cfd3d8"/></svg>
<div class="ddg" style="left:398px;top:168px"></div>
<svg class="a" style="left:410px;top:162px" width="16" height="12" viewBox="0 0 16 12"><path d="M1 6h14M15 6l-5-4v8z" stroke="#cfd3d8" stroke-width="2.5" fill="#cfd3d8"/></svg>
<div class="ddg" style="left:431px;top:168px"></div>
<div class="grip" style="left:447px;top:161px;height:15px"></div>
<svg class="a" style="left:453px;top:160px" width="16" height="16" viewBox="0 0 16 16"><path d="M0 2h6l1 2h9v11H0z" fill="#f2b82a"/><rect x="0" y="5" width="16" height="10" fill="#f6d05a"/><path d="M4 13v-5M4 8l-2 2M4 8l2 2M4 13h8" stroke="#222" stroke-width="1.2" fill="none"/></svg>
<svg class="a" style="left:476px;top:160px" width="16" height="16" viewBox="0 0 16 16"><path d="M0 2h6l1 2h9v11H0z" fill="#f2b82a"/><rect x="0" y="5" width="16" height="10" fill="#f6d05a"/><path d="M7 8l3 5" stroke="#222" stroke-width="1.2"/></svg>
<svg class="a" style="left:499px;top:159px" width="17" height="17" viewBox="0 0 17 17"><path d="M1 8.5L8.5 1 16 8.5" stroke="#3a7ac0" stroke-width="2" fill="none"/><path d="M3 8h11v8H3z" fill="#f0c890"/><rect x="7" y="11" width="3" height="5" fill="#c84a1a"/></svg>
<svg class="a" style="left:522px;top:159px" width="17" height="17" viewBox="0 0 17 17"><path d="M3 7a6 6 0 0 1 11-1" stroke="#4ab83a" stroke-width="2.4" fill="none"/><path d="M15 2v5h-5z" fill="#4ab83a"/><path d="M14 10a6 6 0 0 1-11 1" stroke="#4ab83a" stroke-width="2.4" fill="none"/><path d="M2 15v-5h5z" fill="#4ab83a"/></svg>
<div class="sep" style="left:545px;top:157px"></div>
<svg class="a" style="left:552px;top:159px" width="17" height="17" viewBox="0 0 17 17"><rect x="1" y="1" width="6" height="5" fill="#f2c23a"/><path d="M3 6v8h4M3 10h4" stroke="#888" fill="none"/><rect x="7" y="8" width="9" height="5" fill="#f2c23a"/><rect x="7" y="12" width="9" height="5" fill="#f6d05a"/></svg>

<!-- left row 2 -->
<div class="grip" style="left:180px;top:187px;height:14px"></div>
<svg class="a" style="left:186px;top:186px" width="17" height="17" viewBox="0 0 17 17" opacity=".35"><rect x="5" y="1" width="9" height="11" fill="#fff" stroke="#666"/><rect x="1" y="4" width="9" height="12" fill="#fff" stroke="#666"/><path d="M3 7h5M3 9h5M3 11h5M3 13h5" stroke="#888" stroke-width=".8"/></svg>
<div class="t gray" style="left:208px;top:188px">Upload</div>
<div class="ddg" style="left:255px;top:194px"></div>
<div class="sep" style="left:266px;top:183px;background:#d0d3d7"></div>
<svg class="a" style="left:272px;top:186px" width="17" height="17" viewBox="0 0 17 17" opacity=".35"><rect x="1" y="3" width="11" height="13" fill="#fff" stroke="#666"/><path d="M6 12l8-10 2 2-8 10-3 1z" fill="#f2c23a" stroke="#666" stroke-width=".7"/></svg>
<div class="t gray" style="left:293px;top:188px">Edit</div>
<div class="ddg" style="left:318px;top:194px"></div>
<svg class="a" style="left:334px;top:188px" width="13" height="13" viewBox="0 0 13 13"><path d="M1.5 1.5l10 10M11.5 1.5l-10 10" stroke="#c8ccd0" stroke-width="2"/></svg>
<svg class="a" style="left:355px;top:186px" width="17" height="17" viewBox="0 0 17 17" opacity=".35"><rect x="1" y="10" width="15" height="6" fill="#fff" stroke="#666"/><path d="M5 13l9-11 2 2-9 11z" fill="#f2c23a" stroke="#666" stroke-width=".7"/></svg>
<svg class="a" style="left:378px;top:186px" width="17" height="17" viewBox="0 0 17 17" opacity=".35"><path d="M1 1h9l4 4v11H1z" fill="#fff" stroke="#666"/><rect x="6" y="8" width="9" height="8" fill="#fff" stroke="#666"/><path d="M8 12l2 2 4-5" stroke="#3a3" stroke-width="1.2" fill="none"/></svg>
<div class="t gray" style="left:399px;top:188px">Properties</div>
<div class="ddg" style="left:459px;top:194px"></div>
<svg class="a" style="left:492px;top:187px" width="9" height="7" viewBox="0 0 9 7"><path d="M0.8 0.8l2.7 2.7-2.7 2.7M4.8 0.8l2.7 2.7-2.7 2.7" stroke="#000" stroke-width="1.6" fill="none"/></svg>
<div class="grip" style="left:510px;top:187px;height:14px"></div>
<svg class="a" style="left:516px;top:187px" width="14" height="14" viewBox="0 0 14 14"><rect x="0.5" y="0.5" width="13" height="13" fill="#fff" stroke="#7a8490"/><path d="M7 3v8M3 7h8" stroke="#2a9ad8" stroke-width="2"/></svg>
<svg class="a" style="left:540px;top:187px" width="14" height="14" viewBox="0 0 14 14"><rect x="0.5" y="0.5" width="13" height="13" fill="#f4f4f4" stroke="#cfd3d8"/><path d="M3 7h8" stroke="#d8dadc" stroke-width="2"/></svg>
<svg class="a" style="left:562px;top:187px" width="9" height="7" viewBox="0 0 9 7"><path d="M0.8 0.8l2.7 2.7-2.7 2.7M4.8 0.8l2.7 2.7-2.7 2.7" stroke="#000" stroke-width="1.6" fill="none"/></svg>

<!-- RIGHT PANEL TOOLBARS -->
<div class="grip" style="left:583px;top:161px;height:15px"></div>
<div class="a" style="left:589px;top:158px;width:48px;height:21px;background:#fff;border-radius:1px"></div>
<svg class="a" style="left:591px;top:160px" width="14" height="17" viewBox="0 0 14 17"><path d="M1 2l6 2v13l-6-2z" fill="#e8c45a" stroke="#b8942a" stroke-width=".6"/><path d="M6 3h7v12H6z" fill="#f2d070" stroke="#c8a040" stroke-width=".6"/></svg>
<div class="t" style="left:607px;top:162px;width:12px;overflow:hidden">pu</div>
<div class="dd" style="left:626px;top:168px"></div>
<svg class="a" style="left:640px;top:160px" width="17" height="16" viewBox="0 0 17 16"><path d="M0 4h6l1 1h9v10H0z" fill="#f2c23a"/><path d="M0 7h16l-1 8H0z" fill="#f8d860"/><path d="M5 5q4-5 9-2" stroke="#3a8ad8" stroke-width="2" fill="none"/><path d="M14 0l2 4-4 0z" fill="#3a8ad8"/></svg>
<div class="dd" style="left:662px;top:168px"></div>
<svg class="a" style="left:675px;top:160px" width="16" height="16" viewBox="0 0 16 16"><rect x="0.5" y="0.5" width="15" height="15" fill="#fff" stroke="#6a7480"/><path d="M3 3h10l-4 5v5l-2-1v-4z" fill="#8a9098"/></svg>
<div class="dd" style="left:697px;top:168px"></div>
<div class="grip" style="left:713px;top:161px;height:15px"></div>
<svg class="a" style="left:721px;top:162px" width="16" height="12" viewBox="0 0 16 12"><path d="M3 6h12" stroke="#2aa0d8" stroke-width="3"/><path d="M0 6l6-5v10z" fill="#2aa0d8"/></svg>
<div class="dd" style="left:743px;top:168px"></div>
<svg class="a" style="left:755px;top:162px" width="16" height="12" viewBox="0 0 16 12"><path d="M1 6h11" stroke="#d4d8dc" stroke-width="3"/><path d="M16 6l-6-5v10z" fill="#d4d8dc"/></svg>
<div class="ddg" style="left:776px;top:168px"></div>
<div class="grip" style="left:793px;top:161px;height:15px"></div>
<svg class="a" style="left:800px;top:160px" width="16" height="16" viewBox="0 0 16 16"><path d="M0 2h6l1 2h9v11H0z" fill="#f2b82a"/><rect x="0" y="5" width="16" height="10" fill="#f6d05a"/><path d="M4 13v-5M4 8l-2 2M4 8l2 2M4 13h8" stroke="#222" stroke-width="1.2" fill="none"/></svg>
<svg class="a" style="left:823px;top:160px" width="16" height="16" viewBox="0 0 16 16"><path d="M0 2h6l1 2h9v11H0z" fill="#f2b82a"/><rect x="0" y="5" width="16" height="10" fill="#f6d05a"/><path d="M9 8l-2 5" stroke="#222" stroke-width="1.2"/></svg>
<svg class="a" style="left:846px;top:159px" width="17" height="17" viewBox="0 0 17 17"><path d="M1 8.5L8.5 1 16 8.5" stroke="#3a7ac0" stroke-width="2" fill="none"/><path d="M3 8h11v8H3z" fill="#f0c890"/><rect x="7" y="11" width="3" height="5" fill="#c84a1a"/></svg>
<svg class="a" style="left:869px;top:159px" width="17" height="17" viewBox="0 0 17 17"><path d="M3 7a6 6 0 0 1 11-1" stroke="#4ab83a" stroke-width="2.4" fill="none"/><path d="M15 2v5h-5z" fill="#4ab83a"/><path d="M14 10a6 6 0 0 1-11 1" stroke="#4ab83a" stroke-width="2.4" fill="none"/><path d="M2 15v-5h5z" fill="#4ab83a"/></svg>
<svg class="a" style="left:966px;top:160px" width="9" height="7" viewBox="0 0 9 7"><path d="M0.8 0.8l2.7 2.7-2.7 2.7M4.8 0.8l2.7 2.7-2.7 2.7" stroke="#000" stroke-width="1.6" fill="none"/></svg>

<!-- right row 2 -->
<div class="grip" style="left:583px;top:187px;height:14px"></div>
<svg class="a" style="left:590px;top:186px" width="17" height="17" viewBox="0 0 17 17"><rect x="5" y="1" width="9" height="11" fill="#fff" stroke="#666"/><rect x="1" y="4" width="9" height="12" fill="#fff" stroke="#666"/><path d="M3 7h5M3 9h5M3 11h5M3 13h5" stroke="#888" stroke-width=".8"/><rect x="9" y="10" width="7" height="6" fill="#3ab03a"/><path d="M10 13l2 2 3-4" stroke="#fff" fill="none"/></svg>
<div class="t" style="left:611px;top:188px">Download</div>
<div class="dd" style="left:672px;top:194px"></div>
<div class="sep" style="left:686px;top:183px"></div>
<svg class="a" style="left:692px;top:186px" width="17" height="17" viewBox="0 0 17 17"><rect x="1" y="3" width="11" height="13" fill="#fff" stroke="#666"/><path d="M6 12l8-10 2 2-8 10-3 1z" fill="#f2c23a" stroke="#996" stroke-width=".7"/><path d="M14 2l2 2" stroke="#d43"/></svg>
<div class="t" style="left:712px;top:188px">Edit</div>
<div class="dd" style="left:738px;top:194px"></div>
<svg class="a" style="left:753px;top:188px" width="14" height="13" viewBox="0 0 14 13"><path d="M1.5 1l11 11M12.5 1l-11 11" stroke="#e8642a" stroke-width="2"/></svg>
<svg class="a" style="left:775px;top:186px" width="17" height="17" viewBox="0 0 17 17"><rect x="1" y="10" width="15" height="6" fill="#fff" stroke="#777"/><path d="M5 13l9-11 2 2-9 11z" fill="#f2c23a" stroke="#996" stroke-width=".7"/><path d="M14 2l2 2" stroke="#d43"/></svg>
<svg class="a" style="left:799px;top:186px" width="17" height="17" viewBox="0 0 17 17"><path d="M1 1h9l4 4v11H1z" fill="#fff" stroke="#777"/><rect x="6" y="8" width="9" height="8" fill="#fff" stroke="#777"/><path d="M8 12l2 2 4-5" stroke="#3a3" stroke-width="1.4" fill="none"/></svg>
<div class="t" style="left:819px;top:188px">Properties</div>
<div class="dd" style="left:880px;top:194px"></div>
<svg class="a" style="left:912px;top:187px" width="9" height="7" viewBox="0 0 9 7"><path d="M0.8 0.8l2.7 2.7-2.7 2.7M4.8 0.8l2.7 2.7-2.7 2.7" stroke="#000" stroke-width="1.6" fill="none"/></svg>
<div class="grip" style="left:929px;top:187px;height:14px"></div>
<svg class="a" style="left:936px;top:187px" width="14" height="14" viewBox="0 0 14 14"><rect x="0.5" y="0.5" width="13" height="13" fill="#fff" stroke="#7a8490"/><path d="M7 3v8M3 7h8" stroke="#2a9ad8" stroke-width="2"/></svg>
<svg class="a" style="left:966px;top:187px" width="9" height="7" viewBox="0 0 9 7"><path d="M0.8 0.8l2.7 2.7-2.7 2.7M4.8 0.8l2.7 2.7-2.7 2.7" stroke="#000" stroke-width="1.6" fill="none"/></svg>

<!-- PATH BARS -->
<div class="a" style="left:176px;top:208px;width:398px;height:21px;background:#c0cdd9"></div>
<div class="t" style="left:181px;top:212px;color:#3a4450;letter-spacing:0.1px">C:\Users\Administrator\Documents\</div>
<div class="a" style="left:579px;top:208px;width:399px;height:21px;background:#99b5d4"></div>
<div class="t" style="left:584px;top:212px;color:#1a2430">/pub/</div>
<div class="a" style="left:574px;top:208px;width:5px;height:474px;background:#f0f0f0"></div>

<!-- LEFT LIST -->
<div class="a" style="left:176px;top:229px;width:398px;height:430px;border:1px solid #828790;background:#fff"></div>
<div class="a" style="left:177px;top:230px;width:396px;height:24px;background:linear-gradient(#fff,#f6f7f9);border-bottom:1px solid #d5d5d5"></div>
<div class="a" style="left:177px;top:230px;width:151px;height:24px;background:linear-gradient(#fbfdfe 0,#f1f6fb 48%,#ddeff9 52%,#d9ecf6 100%);border:1px solid #a8dcec;border-left:none;border-top:1px solid #fff"></div>
<div class="a" style="left:397px;top:230px;width:1px;height:24px;background:#e4e6e8"></div>
<div class="a" style="left:517px;top:230px;width:1px;height:24px;background:#e4e6e8"></div>
<svg class="a" style="left:249px;top:231px" width="8" height="6" viewBox="0 0 8 6"><path d="M1 4.8L4 1.2 7 4.8" stroke="#3a4450" stroke-width="1.1" fill="#8a949e"/></svg>
<div class="t" style="left:184px;top:236px">Name</div>
<div class="t" style="left:369px;top:236px">Size</div>
<div class="t" style="left:404px;top:236px">Type</div>
<div class="t" style="left:524px;top:236px;width:48px;overflow:hidden">Changed</div>
<div class="a" style="left:327px;top:254px;width:1px;height:387px;background:#f3f3f3"></div>
<div class="a" style="left:397px;top:254px;width:1px;height:387px;background:#f3f3f3"></div>
<div class="a" style="left:517px;top:254px;width:1px;height:387px;background:#f3f3f3"></div>

<svg class="a" style="left:183px;top:256px" width="14" height="16" viewBox="0 0 14 16"><defs><linearGradient id="fu1" x1="0" x2="1"><stop offset="0" stop-color="#d8c060"/><stop offset=".5" stop-color="#f4e49a"/><stop offset="1" stop-color="#e0c868"/></linearGradient></defs><path d="M0.5 1.5l5-1v15l-5-1z" fill="#e6d27a" stroke="#c0a848" stroke-width=".6"/><rect x="4" y="1" width="9.5" height="14" rx="1" fill="url(#fu1)" stroke="#c8b050" stroke-width=".6"/><path d="M6 5.5v6h5.5M6 5.5l-2 2.2M6 5.5l2 2.2" stroke="#1a1a1a" stroke-width="1.4" fill="none"/></svg>
<div class="t" style="left:202px;top:258px">..</div>
<div class="t" style="left:404px;top:258px">Parent directory</div>
<div class="t" style="left:524px;top:258px;width:49px;overflow:hidden">31/05/2025</div>
<svg class="a" style="left:183px;top:275px" width="14" height="16" viewBox="0 0 14 16"><defs><linearGradient id="fl1" x1="0" x2="1"><stop offset="0" stop-color="#d8c060"/><stop offset=".5" stop-color="#f4e49a"/><stop offset="1" stop-color="#e0c868"/></linearGradient></defs><path d="M0.5 1.5l5-1v15l-5-1z" fill="#e6d27a" stroke="#c0a848" stroke-width=".6"/><rect x="4" y="1" width="9.5" height="14" rx="1" fill="url(#fl1)" stroke="#c8b050" stroke-width=".6"/><path d="M8.5 2v12" stroke="#e8c070" stroke-width="1.5"/></svg>
<div class="t" style="left:200px;top:277px">Lightshot</div>
<div class="t" style="left:404px;top:277px">File folder</div>
<div class="t" style="left:524px;top:277px;width:49px;overflow:hidden">11/05/2025</div>
<svg class="a" style="left:182px;top:294px" width="17" height="17" viewBox="0 0 17 17"><rect x="0.5" y="0.5" width="11" height="13" fill="#e8f0f8" stroke="#4a6a9a"/><rect x="1" y="1" width="10" height="3" fill="#3a8ad8"/><rect x="2" y="7" width="3" height="3" fill="#3ab03a"/><rect x="2" y="10" width="3" height="2" fill="#e04a3a"/><circle cx="11" cy="11" r="5.5" fill="#e8e4f8" stroke="#303040" stroke-width=".9"/><circle cx="11" cy="11" r="1.6" fill="#fff" stroke="#8a8aa0" stroke-width=".6"/><path d="M8 9q2-2 4-1" stroke="#a090e0" fill="none"/></svg>
<div class="t" style="left:200px;top:296px;letter-spacing:-0.25px">ChromeSetup.exe</div>
<div class="t" style="left:337px;top:296px;letter-spacing:-0.25px">11.066 KB</div>
<div class="t" style="left:404px;top:296px">Application</div>
<div class="t" style="left:524px;top:296px;width:49px;overflow:hidden">15/04/2025</div>
<svg class="a" style="left:184px;top:313px" width="13" height="16" viewBox="0 0 13 16"><path d="M0.5 0.5h9l3 3v12h-12z" fill="#fbfbfb" stroke="#6a7078"/><path d="M9.5 0.5v3h3" fill="#e0e0e0" stroke="#6a7078" stroke-width=".7"/><path d="M2 5.5h9M2 7.5h9M2 9.5h9M2 11.5h9M2 13.5h9" stroke="#b8bcc4" stroke-width=".8"/><path d="M2 1.5h1M4 1.5h1M6 1.5h1" stroke="#888" stroke-width=".8"/></svg>
<div class="t" style="left:200px;top:315px">test.txt</div>
<div class="t" style="left:364px;top:315px">1 KB</div>
<div class="t" style="left:404px;top:315px">Text Document</div>
<div class="t" style="left:524px;top:315px;width:49px;overflow:hidden">31/05/2025</div>

<!-- left scrollbar -->
<div class="a" style="left:177px;top:641px;width:396px;height:17px;background:#e8e8e8"></div>
<svg class="a" style="left:183px;top:645px" width="6" height="9" viewBox="0 0 6 9"><path d="M5 0.5v8L0.5 4.5z" fill="#404040"/></svg>
<div class="a" style="left:196px;top:641px;width:287px;height:15px;border:1px solid #9a9a9a;border-radius:3px;background:linear-gradient(#f2f2f2,#e2e2e2 50%,#d0d0d0 51%,#dcdcdc)"></div>
<svg class="a" style="left:335px;top:646px" width="8" height="6" viewBox="0 0 8 6"><path d="M1 0v6M4 0v6M7 0v6" stroke="#4a4a4a"/></svg>
<svg class="a" style="left:561px;top:645px" width="6" height="9" viewBox="0 0 6 9"><path d="M1 0.5v8L5.5 4.5z" fill="#404040"/></svg>

<!-- RIGHT LIST -->
<div class="a" style="left:579px;top:229px;width:399px;height:430px;border:1px solid #828790;background:#fff"></div>
<div class="a" style="left:580px;top:230px;width:397px;height:24px;background:linear-gradient(#fff,#f6f7f9);border-bottom:1px solid #d5d5d5"></div>
<div class="a" style="left:580px;top:230px;width:151px;height:24px;background:linear-gradient(#fbfdfe 0,#f1f6fb 48%,#ddeff9 52%,#d9ecf6 100%);border:1px solid #a8dcec;border-left:none;border-top:1px solid #fff"></div>
<div class="a" style="left:801px;top:230px;width:1px;height:24px;background:#e4e6e8"></div>
<div class="a" style="left:949px;top:230px;width:1px;height:24px;background:#e4e6e8"></div>
<svg class="a" style="left:652px;top:231px" width="8" height="6" viewBox="0 0 8 6"><path d="M1 4.8L4 1.2 7 4.8" stroke="#3a4450" stroke-width="1.1" fill="#8a949e"/></svg>
<div class="t" style="left:587px;top:236px">Name</div>
<div class="t" style="left:772px;top:236px">Size</div>
<div class="t" style="left:807px;top:236px">Changed</div>
<div class="t" style="left:957px;top:236px;width:20px;overflow:hidden">Rights</div>
<div class="a" style="left:730px;top:254px;width:1px;height:387px;background:#f3f3f3"></div>
<div class="a" style="left:801px;top:254px;width:1px;height:387px;background:#f3f3f3"></div>
<div class="a" style="left:949px;top:254px;width:1px;height:387px;background:#f3f3f3"></div>

<svg class="a" style="left:586px;top:256px" width="14" height="16" viewBox="0 0 14 16"><defs><linearGradient id="fu2" x1="0" x2="1"><stop offset="0" stop-color="#d8c060"/><stop offset=".5" stop-color="#f4e49a"/><stop offset="1" stop-color="#e0c868"/></linearGradient></defs><path d="M0.5 1.5l5-1v15l-5-1z" fill="#e6d27a" stroke="#c0a848" stroke-width=".6"/><rect x="4" y="1" width="9.5" height="14" rx="1" fill="url(#fu2)" stroke="#c8b050" stroke-width=".6"/><path d="M6 5.5v6h5.5M6 5.5l-2 2.2M6 5.5l2 2.2" stroke="#1a1a1a" stroke-width="1.4" fill="none"/></svg>
<div class="t" style="left:605px;top:258px">..</div>
<div class="a" style="left:585px;top:274px;width:144px;height:19px;border:1px solid #8aaad4;border-radius:2px;background:linear-gradient(#f0f6fd,#dce9f9 60%,#c9ddf6)"></div>
<div class="a" style="left:585px;top:293px;width:144px;height:19px;border:1px solid #8aaad4;border-radius:2px;background:linear-gradient(#f0f6fd,#dce9f9 60%,#c9ddf6)"></div>
<svg class="a" style="left:585px;top:276px" width="16" height="14" viewBox="0 0 16 14"><rect x="0.5" y="0.5" width="15" height="13" fill="#f4f6f8" stroke="#5a6a7c"/><rect x="1" y="1" width="14" height="2" fill="#8aa8c8"/><rect x="2.5" y="5" width="4" height="5" fill="#2a8a78"/><path d="M8 6h4M8 8h4M8 10h3" stroke="#8a9098" stroke-width=".9"/><path d="M13.5 5v3" stroke="#333" stroke-width="1.2"/></svg>
<div class="a" style="left:602px;top:276px;width:97px;height:16px;border:1px dotted #333"></div>
<div class="t" style="left:603px;top:278px;letter-spacing:-0.25px">ChromeSetup.exe</div>
<div class="t" style="left:740px;top:278px;letter-spacing:-0.25px">11.066 KB</div>
<div class="t" style="left:806px;top:278px;letter-spacing:-0.38px">15/04/2025 21:02:57</div>
<div class="t" style="left:957px;top:278px">rw-</div>
<svg class="a" style="left:587px;top:295px" width="13" height="16" viewBox="0 0 13 16"><path d="M0.5 0.5h9l3 3v12h-12z" fill="#fbfbfb" stroke="#6a7078"/><path d="M9.5 0.5v3h3" fill="#e0e0e0" stroke="#6a7078" stroke-width=".7"/><path d="M2 5.5h9M2 7.5h9M2 9.5h9M2 11.5h9M2 13.5h9" stroke="#b8bcc4" stroke-width=".8"/><path d="M2 1.5h1M4 1.5h1M6 1.5h1" stroke="#888" stroke-width=".8"/></svg>
<div class="t" style="left:603px;top:297px">test.txt</div>
<div class="t" style="left:957px;top:297px">rw-</div>

<!-- right scrollbar -->
<div class="a" style="left:580px;top:641px;width:397px;height:17px;background:#e8e8e8"></div>
<svg class="a" style="left:587px;top:645px" width="6" height="9" viewBox="0 0 6 9"><path d="M5 0.5v8L0.5 4.5z" fill="#404040"/></svg>
<div class="a" style="left:599px;top:641px;width:277px;height:15px;border:1px solid #9a9a9a;border-radius:3px;background:linear-gradient(#f2f2f2,#e2e2e2 50%,#d0d0d0 51%,#dcdcdc)"></div>
<svg class="a" style="left:733px;top:646px" width="8" height="6" viewBox="0 0 8 6"><path d="M1 0v6M4 0v6M7 0v6" stroke="#4a4a4a"/></svg>
<svg class="a" style="left:965px;top:645px" width="6" height="9" viewBox="0 0 6 9"><path d="M1 0.5v8L5.5 4.5z" fill="#404040"/></svg>

<!-- STATUS -->
<div class="t" style="left:179px;top:664px;letter-spacing:-0.2px">0 B of 10,8 MB in 0 of 3</div>
<div class="t" style="left:524px;top:664px">4 hidden</div>
<div class="t" style="left:581px;top:664px;letter-spacing:-0.2px">10,8 MB of 10,8 MB in 2 of 2</div>
<div class="a" style="left:176px;top:682px;width:802px;height:19px;background:#f0f0f0"></div>
<div class="a" style="left:177px;top:682px;width:632px;height:19px;border:1px solid #dcdcdc;border-bottom-color:#f4f4f4"></div>
<div class="a" style="left:811px;top:682px;width:50px;height:19px;border:1px solid #dcdcdc;border-bottom-color:#f4f4f4"></div>
<div class="t" style="left:826px;top:686px">FTP</div>
<div class="a" style="left:863px;top:682px;width:33px;height:19px;border:1px solid #dcdcdc;border-bottom-color:#f4f4f4"></div>
<svg class="a" style="left:872px;top:684px" width="15" height="17" viewBox="0 0 15 17"><path d="M3.5 8V5.5a4 4 0 0 1 8 0V8" stroke="#cfcfcf" stroke-width="2" fill="none"/><rect x="2" y="7.5" width="11" height="9" rx="1" fill="#d4d4d4" stroke="#c4c4c4"/></svg>
<div class="a" style="left:898px;top:682px;width:79px;height:19px;border:1px solid #dcdcdc;border-bottom-color:#f4f4f4"></div>
<div class="t" style="left:919px;top:686px;letter-spacing:-0.55px">0:02:21</div>
<svg class="a" style="left:966px;top:688px" width="10" height="10" viewBox="0 0 10 10"><path d="M8 2h1M5 5h1M8 5h1M2 8h1M5 8h1M8 8h1" stroke="#b0b0b0"/></svg>
<!-- CONTEXT MENU -->
<div class="a" style="left:706px;top:290px;width:207px;height:255px;background:rgba(0,0,0,.12);filter:blur(2px)"></div>
<div class="a" style="left:704px;top:288px;width:207px;height:255px;border:1px solid #979797;background:#fcfcfc"></div>
<div class="a" style="left:705px;top:289px;width:26px;height:253px;background:linear-gradient(90deg,#f1f1f1 0,#f1f1f1 23px,#fcfcfc 26px)"></div>
<!-- delete highlight -->
<div class="a" style="left:706px;top:400px;width:203px;height:22px;border:1px solid #8ec2ef;border-radius:2px;background:linear-gradient(#dcebfc,#c5def8)"></div>
<!-- separators -->
<div class="a" style="left:736px;top:445px;width:172px;height:1px;background:#d7d7d7"></div>
<div class="a" style="left:736px;top:446px;width:172px;height:1px;background:#fff"></div>
<div class="a" style="left:736px;top:470px;width:172px;height:1px;background:#d7d7d7"></div>
<div class="a" style="left:736px;top:471px;width:172px;height:1px;background:#fff"></div>
<div class="a" style="left:736px;top:516px;width:172px;height:1px;background:#d7d7d7"></div>
<div class="a" style="left:736px;top:517px;width:172px;height:1px;background:#fff"></div>
<!-- split lines -->
<div class="a" style="left:895px;top:313px;width:1px;height:19px;background:#c8c8c8"></div>
<div class="a" style="left:895px;top:335px;width:1px;height:19px;background:#c8c8c8"></div>
<!-- icons -->
<svg class="a" style="left:709px;top:293px" width="16" height="16" viewBox="0 0 16 16"><path d="M1 3h5l1 1h5v3" fill="#f2c23a"/><rect x="6" y="1" width="8" height="9" fill="#fff" stroke="#aaa" stroke-width=".6"/><path d="M0 6h15l-1 9H1z" fill="#f6cf55"/><path d="M0 6h15" stroke="#e8b030"/></svg>
<svg class="a" style="left:709px;top:314px" width="16" height="17" viewBox="0 0 16 17"><rect x="1" y="3" width="11" height="13" fill="#fff" stroke="#777"/><path d="M6 12l8-10 2 2-8 10-3 1z" fill="#f2c23a" stroke="#996" stroke-width=".7"/><path d="M14 2l2 2" stroke="#d43" stroke-width="1.2"/></svg>
<svg class="a" style="left:709px;top:336px" width="17" height="17" viewBox="0 0 17 17"><rect x="5" y="1" width="9" height="11" fill="#fff" stroke="#777"/><rect x="1" y="4" width="9" height="12" fill="#fff" stroke="#777"/><path d="M3 7h5M3 9h5M3 11h5M3 13h5" stroke="#888" stroke-width=".8"/><rect x="9" y="10" width="7" height="6" fill="#3ab03a"/><path d="M10 13l2 2 3-4" stroke="#fff" fill="none"/></svg>
<svg class="a" style="left:709px;top:358px" width="17" height="17" viewBox="0 0 17 17"><rect x="5" y="1" width="9" height="9" fill="#fff" stroke="#888"/><rect x="1" y="3" width="9" height="9" fill="#fff" stroke="#888"/><path d="M3 6h5M3 8h5" stroke="#999" stroke-width=".8"/><path d="M6 10h5v-3l5 5-5 5v-3H6z" fill="#f2b82a"/></svg>
<svg class="a" style="left:709px;top:380px" width="17" height="17" viewBox="0 0 17 17"><rect x="5" y="1" width="9" height="9" fill="#fff" stroke="#888"/><rect x="1" y="3" width="9" height="9" fill="#fff" stroke="#888"/><path d="M3 6h5M3 8h5" stroke="#999" stroke-width=".8"/><path d="M6 10h5v-3l5 5-5 5v-3H6z" fill="#f2b82a"/></svg>
<svg class="a" style="left:710px;top:404px" width="14" height="14" viewBox="0 0 14 14"><path d="M1.5 1.5l11 11M12.5 1.5l-11 11" stroke="#e0502a" stroke-width="2.2"/></svg>
<svg class="a" style="left:708px;top:424px" width="18" height="17" viewBox="0 0 18 17"><rect x="1" y="10" width="15" height="6" fill="#fff" stroke="#888"/><path d="M5 13l9-11 2 2-9 11z" fill="#f2c23a" stroke="#996" stroke-width=".7"/><path d="M14 2l2 2" stroke="#d43" stroke-width="1.2"/></svg>
<svg class="a" style="left:709px;top:449px" width="16" height="17" viewBox="0 0 16 17"><rect x="1" y="1" width="8" height="10" fill="#fff" stroke="#999"/><rect x="6" y="5" width="8" height="11" fill="#fff" stroke="#999"/><path d="M8 8h4M8 10h4M8 12h4" stroke="#aaa" stroke-width=".8"/></svg>
<svg class="a" style="left:709px;top:521px" width="17" height="17" viewBox="0 0 17 17"><path d="M1 1h9l4 4v11H1z" fill="#fff" stroke="#888"/><rect x="6" y="8" width="9" height="8" fill="#fff" stroke="#888"/><path d="M8 12l2 2 4-5" stroke="#3a3" stroke-width="1.4" fill="none"/></svg>
<!-- labels -->
<div class="t" style="left:736px;top:294px">Open</div>
<div class="t" style="left:736px;top:316px;font-weight:bold">Edit</div>
<div class="t" style="left:736px;top:338px">Download...</div>
<div class="t" style="left:880px;top:338px">F5</div>
<div class="t" style="left:736px;top:360px">Duplicate...</div>
<div class="t" style="left:848px;top:360px;letter-spacing:-0.2px">Shift+F5</div>
<div class="t" style="left:736px;top:382px">Move To...</div>
<div class="t" style="left:848px;top:382px;letter-spacing:-0.2px">Shift+F6</div>
<div class="t" style="left:736px;top:404px">Delete</div>
<div class="t" style="left:880px;top:404px">F8</div>
<div class="t" style="left:736px;top:426px">Rename</div>
<div class="t" style="left:880px;top:426px">F2</div>
<div class="t" style="left:736px;top:451px">Copy to Clipboard</div>
<div class="t" style="left:736px;top:476px">File Custom Commands</div>
<div class="t" style="left:736px;top:498px">File Names</div>
<div class="t" style="left:736px;top:523px">Properties</div>
<div class="t" style="left:880px;top:523px">F9</div>
<svg class="a" style="left:898px;top:318px" width="5" height="9" viewBox="0 0 5 9"><path d="M0 0v9l4.5-4.5z" fill="#000"/></svg>
<svg class="a" style="left:898px;top:340px" width="5" height="9" viewBox="0 0 5 9"><path d="M0 0v9l4.5-4.5z" fill="#000"/></svg>
<svg class="a" style="left:898px;top:478px" width="5" height="9" viewBox="0 0 5 9"><path d="M0 0v9l4.5-4.5z" fill="#000"/></svg>
<svg class="a" style="left:898px;top:500px" width="5" height="9" viewBox="0 0 5 9"><path d="M0 0v9l4.5-4.5z" fill="#000"/></svg>

<!-- TOOLTIP -->
<div class="a" style="left:806px;top:433px;width:209px;height:51px;background:rgba(0,0,0,.15);filter:blur(2px)"></div>
<div class="a" style="left:803px;top:430px;width:210px;height:52px;border:1px solid #767676;border-radius:2px;background:linear-gradient(#fff,#f2f2f8 50%,#e4e5f0)"></div>
<div class="t" style="left:809px;top:437px;font-weight:bold">Delete (F8)</div>
<div class="t" style="left:818px;top:462px;letter-spacing:-0.22px">Delete selected file(s)</div>
<!-- TASKBAR -->
<div class="a" style="left:0;top:739px;width:1024px;height:40px;background:linear-gradient(90deg,#8094ac 0,#8296ae 52px,#a4bcd8 64px,#a6bedb 400px,#a6c0dc 736px,#8298b0 762px,#8194ac 900px,#8090a8 1024px)"></div>
<div class="a" style="left:0;top:739px;width:1024px;height:1px;background:#0c3458"></div>
<div class="a" style="left:0;top:740px;width:1024px;height:1px;background:rgba(220,236,255,.75)"></div>
<div class="a" style="left:0;top:741px;width:1024px;height:38px;background:linear-gradient(rgba(255,255,255,.06),rgba(255,255,255,0) 40%,rgba(0,0,0,.02))"></div>
<!-- start orb -->
<svg class="a" style="left:8px;top:740px" width="38" height="38" viewBox="0 0 38 38">
<defs>
<radialGradient id="orb" cx="0.5" cy="0.8" r="0.7"><stop offset="0" stop-color="#5ad8f8"/><stop offset="0.45" stop-color="#1a78b8"/><stop offset="1" stop-color="#0a2a58"/></radialGradient>
<linearGradient id="orbh" x1="0" y1="0" x2="0" y2="1"><stop offset="0" stop-color="#fff" stop-opacity=".75"/><stop offset="1" stop-color="#fff" stop-opacity="0"/></linearGradient>
</defs>
<circle cx="19" cy="19" r="17.8" fill="url(#orb)" stroke="#0a1e3a" stroke-width="1.2"/>
<path d="M9.5 12.5 q4-2.5 8.5-0.5 l-1.6 6.8 q-4.2-1.8-8.6 0.4z" fill="#f0502a"/>
<path d="M19.2 12.3 q4.2 2 8.8 0 l-1.6 6.8 q-4.3 2-8.8 0.2z" fill="#8ac83a"/>
<path d="M7.6 19.8 q4.3-2.3 8.6-0.4 l-1.6 6.8 q-4.3-1.9-8.6 0.3z" fill="#3aa8f0"/>
<path d="M17.3 19.8 q4.3 2 8.8 0 l-1.6 6.8 q-4.4 2-8.8 0.1z" fill="#f8c830"/>
<ellipse cx="19" cy="10.5" rx="12.5" ry="7.5" fill="url(#orbh)"/>
</svg>
<!-- buttons -->
<div class="a" style="left:60px;top:740px;width:54px;height:38px;border:1px solid #34465c;border-radius:3px;background:linear-gradient(#dce2ec,#c8d2e2 50%,#bccadc);box-shadow:inset 0 0 0 1px rgba(255,255,255,.6)"></div>
<div class="a" style="left:113px;top:741px;width:5px;height:37px;border:1px solid #34465c;border-left:none;border-radius:0 3px 3px 0;background:#b8c8dc"></div>
<svg class="a" style="left:66px;top:740px" width="42" height="38" viewBox="66 740 42 38">
<defs><linearGradient id="ieg" x1="0" y1="0" x2="0" y2="1"><stop offset="0" stop-color="#7ad4f8"/><stop offset="1" stop-color="#1a88d0"/></linearGradient></defs>
<path d="M98.5 760.5 A11.5 11.5 0 1 0 96.4 767.1" stroke="url(#ieg)" stroke-width="5" fill="none"/>
<path d="M77.5 760.5 H100.5" stroke="#2a9ad8" stroke-width="3.6"/>
<path d="M72 773 Q 70 764 82 753 Q 96 741 104 746 Q 106 750 100 755 Q 102 748 96 748 Q 86 750 78 760 Q 73 767 72 773Z" fill="#f6c02a" stroke="#d8a010" stroke-width=".5"/>
</svg>
<!-- explorer (no border) -->
<svg class="a" style="left:134px;top:744px" width="34" height="32" viewBox="0 0 34 32">
<path d="M2 6h10l2 2h16v20H2z" fill="#f2d48a" stroke="#c8a850" stroke-width=".8"/>
<rect x="6" y="2" width="4" height="3" fill="#4ab83a"/><rect x="13" y="3" width="4" height="3" fill="#e04a3a"/><rect x="19" y="5" width="4" height="3" fill="#4ab83a"/>
<path d="M2 11h30v18H2z" fill="#f8e2a0"/>
<path d="M8 18h18v11h-4v-6H12v6H8z" fill="#4aa8e8" stroke="#2a78b8" stroke-width=".8"/>
</svg>
<!-- media player -->
<svg class="a" style="left:196px;top:745px" width="32" height="30" viewBox="196 745 32 30">
<rect x="204" y="748.5" width="21" height="23" fill="#b8dcf4" stroke="#7ab0d8" stroke-width=".8"/>
<rect x="202" y="748" width="21" height="23" fill="#c0e2f8" stroke="#7ab0d8" stroke-width=".8"/>
<rect x="200" y="747.5" width="21" height="23.5" fill="#cce8fa" stroke="#7ab0d8" stroke-width=".8"/>
<circle cx="209.7" cy="759.5" r="8" fill="#f07a18" stroke="#d05a08" stroke-width=".8"/>
<path d="M206.5 754.5 L214.5 759.5 L206.5 764.5Z" fill="#fff"/>
</svg>
<!-- cmd -->
<div class="a" style="left:246px;top:740px;width:58px;height:38px;border:1px solid #34465c;border-radius:3px;background:linear-gradient(#dce2ec,#c8d2e2 50%,#bccadc);box-shadow:inset 0 0 0 1px rgba(255,255,255,.6)"></div>
<svg class="a" style="left:259px;top:746px" width="30" height="25" viewBox="0 0 30 25">
<rect x="1" y="0.5" width="28" height="23.5" fill="#050505" stroke="#606870" stroke-width=".8"/>
<rect x="1.4" y="0.9" width="27.2" height="2.6" fill="#d8dce4"/>
<text x="4.5" y="12.5" font-family="Liberation Mono" font-size="8.5" fill="#fff">C:\</text>
<path d="M17.5 11.8h8" stroke="#fff" stroke-width="1.2"/>
</svg>
<!-- putty -->
<div class="a" style="left:308px;top:740px;width:58px;height:38px;border:1px solid #34465c;border-radius:3px;background:linear-gradient(#dce2ec,#c8d2e2 50%,#bccadc);box-shadow:inset 0 0 0 1px rgba(255,255,255,.6)"></div>
<svg class="a" style="left:318px;top:742px" width="38" height="36" viewBox="318 742 38 36">
<path d="M336 744.5 h13 v10.5 h-13z" fill="#d8d8d8" stroke="#101010" stroke-width="1.2"/>
<rect x="338" y="746.5" width="9" height="7" fill="#0000c8"/>
<path d="M333 755 h17 l2 2.5 v3.5 h-19z" fill="#e8e8e8" stroke="#101010" stroke-width="1.2"/>
<path d="M325 757.5 h13 v10.5 h-13z" fill="#d8d8d8" stroke="#101010" stroke-width="1.2"/>
<rect x="327" y="759.5" width="9" height="7" fill="#0000c8"/>
<path d="M322 768 h17 l2 2.5 v3.5 h-19z" fill="#e8e8e8" stroke="#101010" stroke-width="1.2"/>
<path d="M343 750 L332 757.5 L336 758.5 L328 766 L341 757 L337 756 Z" fill="#f8f020" stroke="#404000" stroke-width=".6"/>
</svg>
<!-- notepad -->
<div class="a" style="left:370px;top:740px;width:58px;height:38px;border:1px solid #34465c;border-radius:3px;background:linear-gradient(#dce2ec,#c8d2e2 50%,#bccadc);box-shadow:inset 0 0 0 1px rgba(255,255,255,.6)"></div>
<svg class="a" style="left:380px;top:743px" width="36" height="34" viewBox="380 743 36 34">
<defs><linearGradient id="npg" x1="0" x2="1" y1="0" y2="1"><stop offset="0" stop-color="#d8f4f4"/><stop offset=".35" stop-color="#7ccccc"/><stop offset="1" stop-color="#3aa8b0"/></linearGradient></defs>
<path d="M398 748 L412 750 L410 774 L404 775 Z" fill="#f4f4f0" stroke="#b8b0a0" stroke-width=".6"/>
<path d="M411 750 L413 751 L411 775 L409 775Z" fill="#b8a890"/>
<path d="M397 748 L410 750 L404 775 L384 771 Z" fill="url(#npg)" stroke="#5aa8b0" stroke-width=".6"/>
<path d="M398 746 L410 748.5" stroke="#a0a0a0" stroke-width="2.2" stroke-dasharray="1 1"/>
</svg>
<!-- chrome -->
<div class="a" style="left:432px;top:740px;width:58px;height:38px;border:1px solid #34465c;border-radius:3px;background:linear-gradient(#dce2ec,#c8d2e2 50%,#bccadc);box-shadow:inset 0 0 0 1px rgba(255,255,255,.6)"></div>
<svg class="a" style="left:445px;top:744px" width="32" height="32" viewBox="0 0 48 48">
<circle cx="24" cy="24" r="22" fill="#e0433a"/>
<path d="M24 24 L5 13 A22 22 0 0 0 16 44.5 Z" fill="#2fa84f"/>
<path d="M24 24 L16 44.5 A22 22 0 0 0 46 24 L42 13 Z" fill="#f8c533"/>
<path d="M24 24 L5 13 A22 22 0 0 1 43 13 Z" fill="#e0433a"/>
<circle cx="24" cy="24" r="10" fill="#fff"/>
<circle cx="24" cy="24" r="7.5" fill="#4b8bf0"/>
</svg>
<!-- winscp -->
<div class="a" style="left:494px;top:740px;width:58px;height:38px;border:1px solid #34465c;border-radius:3px;background:linear-gradient(#dae4f0,#c6d4e6 50%,#bccee2);box-shadow:inset 0 0 0 1px rgba(255,255,255,.65)"></div>
<svg class="a" style="left:504px;top:741px" width="38" height="36" viewBox="504 741 38 36">
<path d="M507 743.5 h13 l-3.8 3.8 6.5 6.5 -3.3 3.3 -6.5-6.5 -3.8 3.8z" fill="#7accf4" stroke="#1a70b0" stroke-width=".9"/>
<path d="M518 758 v-5 a5.3 5.3 0 0 1 10.6 0 v5" stroke="#505058" stroke-width="3.2" fill="none"/>
<path d="M518 758 v-5 a5.3 5.3 0 0 1 10.6 0 v5" stroke="#e8e8ec" stroke-width="1.6" fill="none"/>
<rect x="514.5" y="757.5" width="17.5" height="12" rx="1.5" fill="url(#lk)" stroke="#404048" stroke-width=".9"/>
<path d="M539 775 h-14 l3.8-3.8 -5.5-5.5 4-4 5.5 5.5 3.8-3.8z" fill="#62d020" stroke="#2a8a10" stroke-width=".9"/>
</svg>
<!-- tray -->
<div class="t" style="left:777px;top:749px;color:#fff;font-size:12px">EN</div>
<svg class="a" style="left:807px;top:751px" width="17" height="18" viewBox="0 0 17 18"><rect x="3" y="4" width="11" height="13" fill="#7ac0f0" stroke="#3a80c0"/><path d="M1 6q3-5 8-3" stroke="#f28a1a" stroke-width="2" fill="none"/><rect x="8" y="1" width="3" height="3" fill="#e04a3a"/><rect x="12" y="3" width="3" height="3" fill="#4ab83a"/></svg>
<svg class="a" style="left:832px;top:752px" width="16" height="16" viewBox="0 0 16 16"><path d="M1 15q6-10 14-14" stroke="#9a3ab8" stroke-width="2" fill="none"/><path d="M3 14q6-6 11-12" stroke="#c88ae8" stroke-width="1"/></svg>
<svg class="a" style="left:856px;top:751px" width="16" height="18" viewBox="0 0 16 18"><rect x="3" y="1" width="6" height="4" fill="#ddd" stroke="#666"/><rect x="2" y="5" width="8" height="9" fill="#555" stroke="#333"/><circle cx="11" cy="12" r="5" fill="#3aa83a" stroke="#fff"/><path d="M8.5 12l2 2 3-4" stroke="#fff" stroke-width="1.3" fill="none"/></svg>
<svg class="a" style="left:880px;top:751px" width="15" height="17" viewBox="0 0 15 17"><path d="M2 1v16" stroke="#fff" stroke-width="1.6"/><path d="M3 2h5l1 1h5v6h-5l-1-1H3z" fill="#fff" stroke="#555" stroke-width=".6"/></svg>
<svg class="a" style="left:904px;top:751px" width="16" height="17" viewBox="0 0 16 17"><rect x="5" y="5" width="10" height="8" fill="#ddd" stroke="#fff"/><path d="M3 1v8M1 3v4h4V3" stroke="#fff" fill="none" stroke-width="1.3"/><path d="M8 14v2h6" stroke="#fff"/></svg>
<svg class="a" style="left:930px;top:751px" width="14" height="16" viewBox="0 0 14 16"><path d="M1 6h3l4-4v12l-4-4H1z" fill="#fff" stroke="#555" stroke-width=".6"/><path d="M10 5q2 3 0 6" stroke="#fff" fill="none"/></svg>
<div class="t" style="left:980px;top:745px;color:#fff;font-size:12px">8:48</div>
<div class="t" style="left:961px;top:761px;color:#fff;font-size:12px;letter-spacing:-0.2px">01/06/2025</div>
</body></html>
